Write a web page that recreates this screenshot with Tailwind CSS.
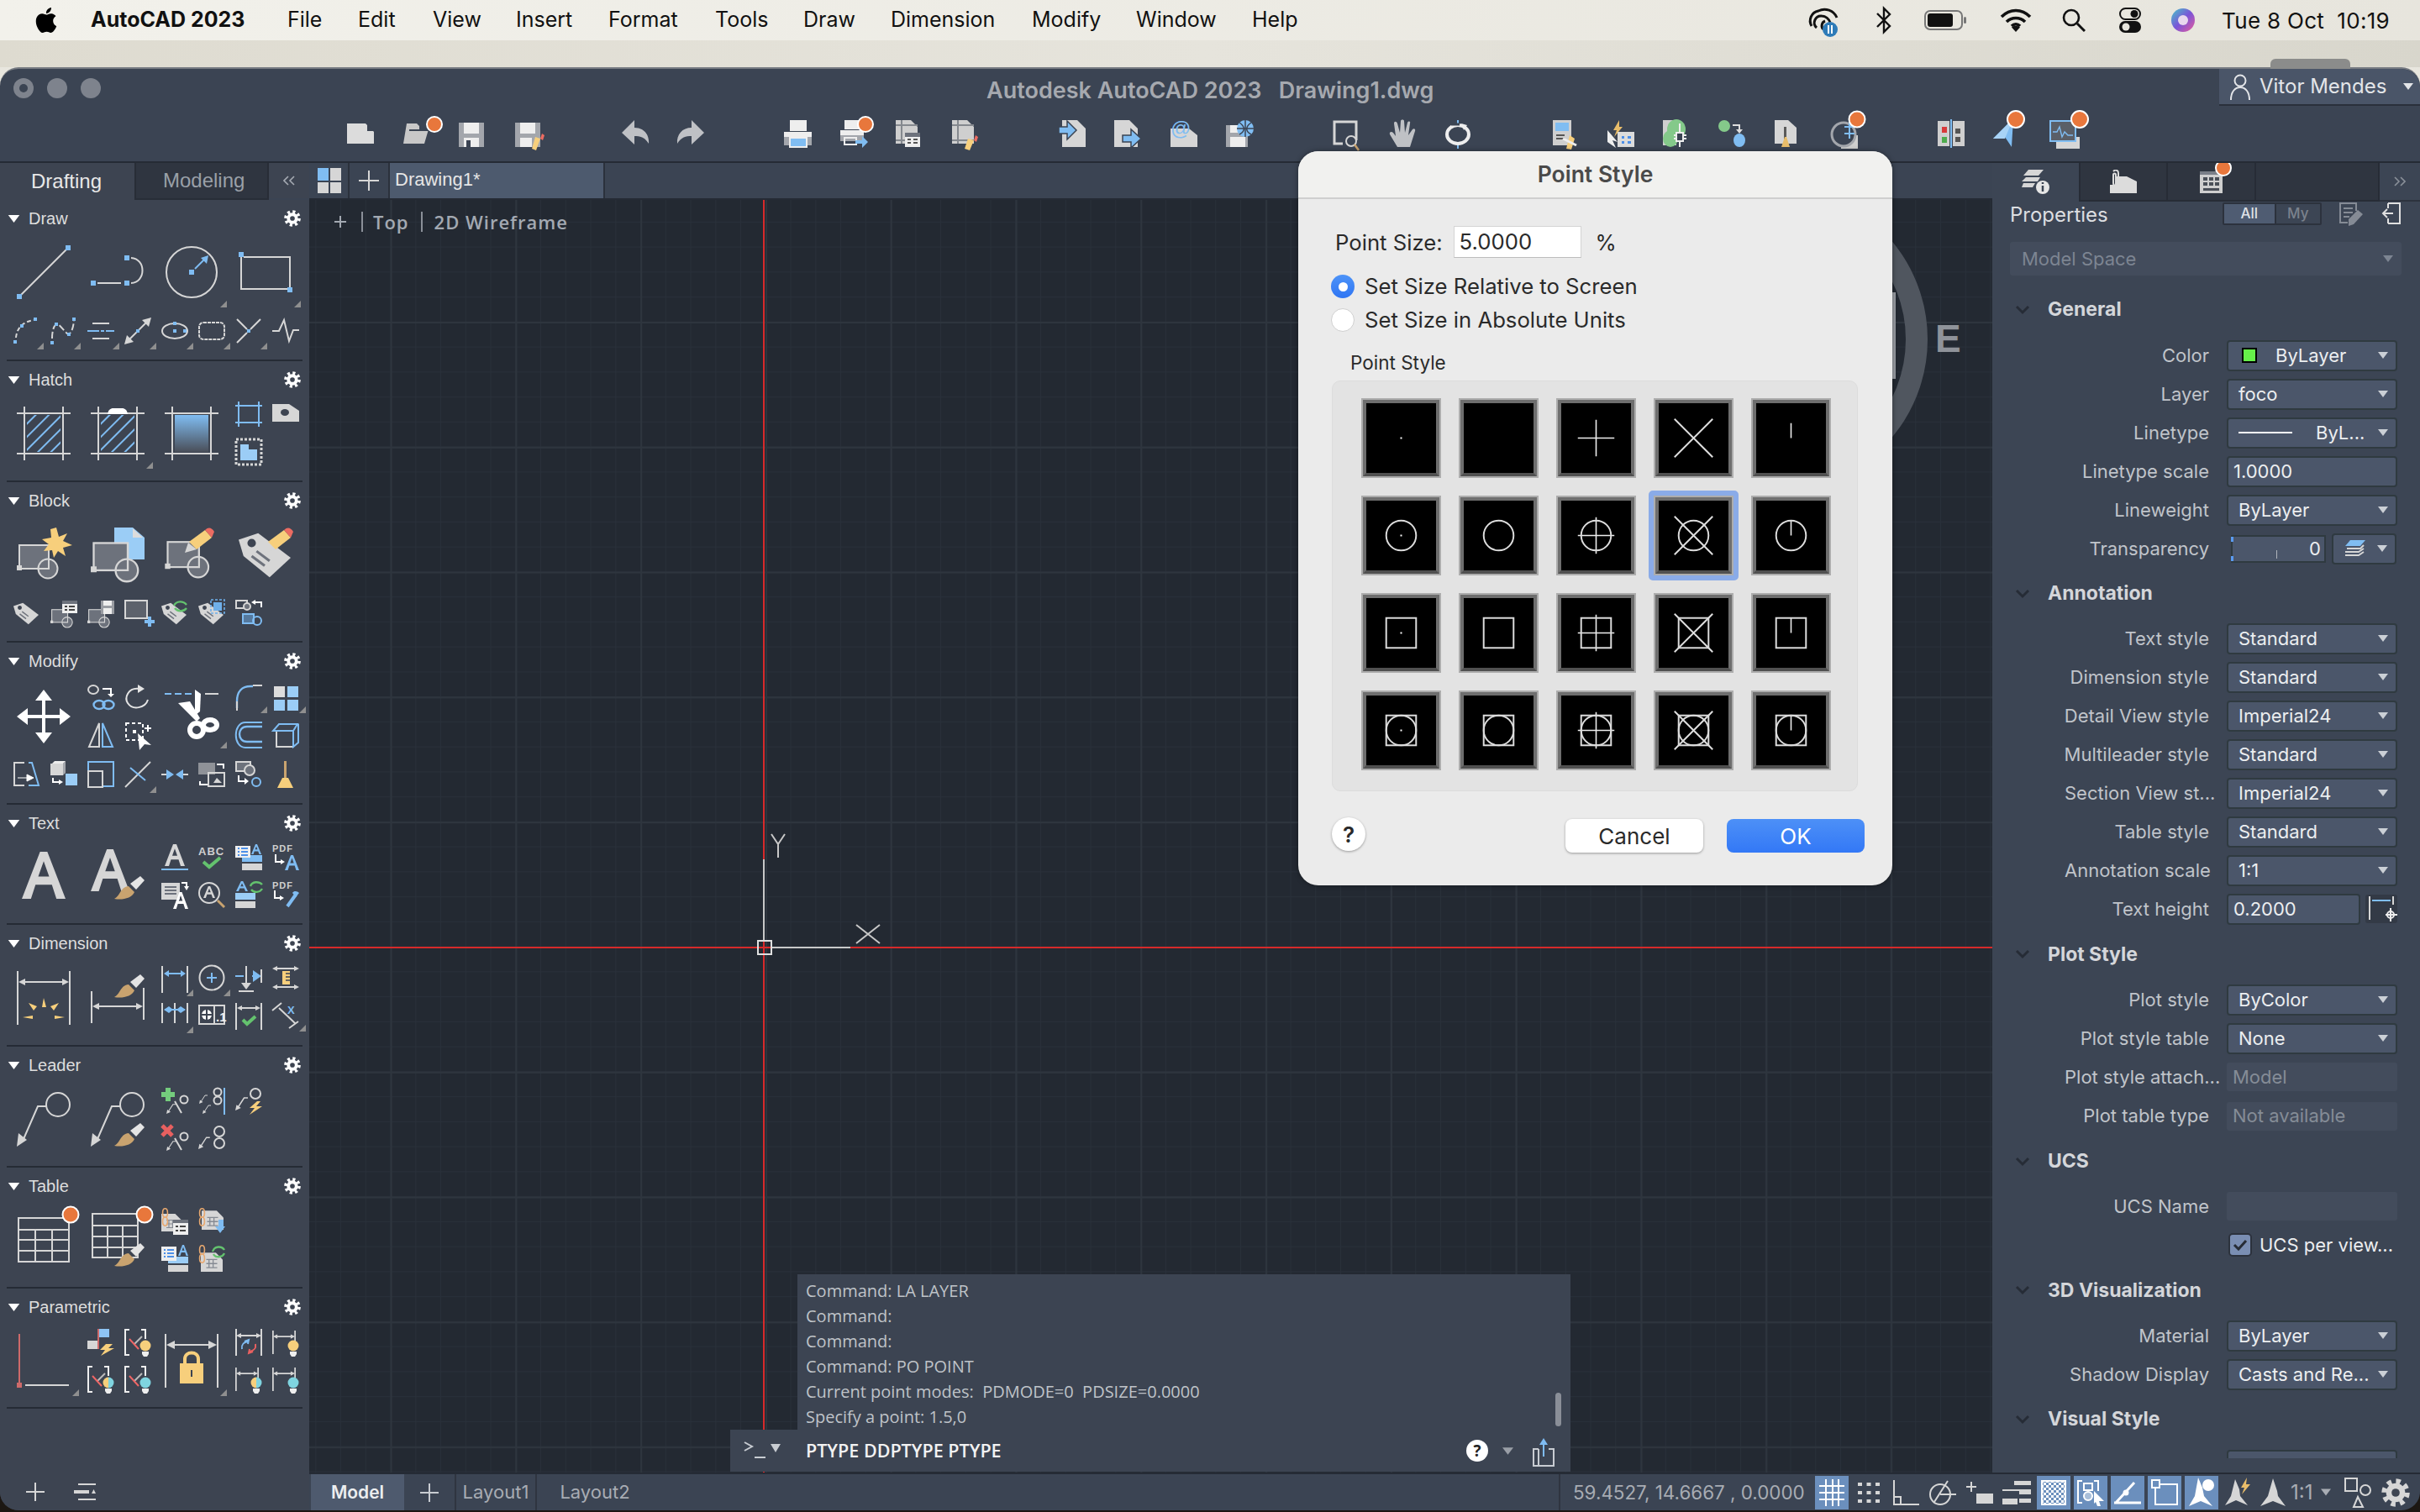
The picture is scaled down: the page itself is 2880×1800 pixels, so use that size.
<!DOCTYPE html>
<html>
<head>
<meta charset="utf-8">
<script src="https://cdn.jsdelivr.net/npm/@tailwindcss/browser@4"></script>
</head>
<body class="w-[2880px] h-[1800px] overflow-hidden relative flex flex-col font-['Inter'] bg-[linear-gradient(#e9e7df_0,#e6e4dc_300px,#1c1712_300px)]">
<svg class="absolute w-0 h-0">
<defs>
<pattern id="hp" width="11" height="11" patternUnits="userSpaceOnUse" patternTransform="rotate(45)"><rect width="2" height="11" fill="#7fbcf2" transform="rotate(0)"/></pattern>
<linearGradient id="gr" x1="0" y1="0" x2="0" y2="1"><stop offset="0" stop-color="#80bdf2"/><stop offset="1" stop-color="#4a4f59"/></linearGradient>
</defs>
<symbol id="gear" viewBox="0 0 24 24"><circle cx="12" cy="12" r="9.6" fill="none" stroke="currentColor" stroke-width="4.4" stroke-dasharray="3.77 3.77"/><circle cx="12" cy="12" r="8" fill="currentColor"/><circle cx="12" cy="12" r="3.4" fill="#3d4451"/></symbol>
<symbol id="tri" viewBox="0 0 12 8"><polygon points="0,0 12,0 6,8" fill="currentColor"/></symbol>
<symbol id="blk" viewBox="0 0 50 44" overflow="visible"><rect x="3" y="3" width="35" height="28" fill="#6d727c" stroke="#d6d6d6" stroke-width="2"/><rect x="0" y="27" width="6" height="6" fill="#d6d6d6"/><circle cx="37" cy="31" r="11.5" fill="#6d727c" stroke="#d6d6d6" stroke-width="2"/><path d="M38 3V31H26" fill="none" stroke="#d6d6d6" stroke-width="2"/></symbol>
<symbol id="tag" viewBox="0 0 32 28"><path d="M0 5 12 1 32 16 19 28 3 15Z" fill="#d6d6d6"/><circle cx="8" cy="7" r="2.6" fill="#3d4451"/><path d="M11 12l8 6M8 15l8 6" stroke="#6d727c" stroke-width="1.6"/></symbol>
<symbol id="brush" viewBox="0 0 36 28"><path d="M0 27C7 24 7 13 17 12L24 19C21 26 10 29 0 27Z" fill="#c9a36f"/><path d="M19 9 31 0 36 5 26 16Z" fill="#e4e4e4"/></symbol>
<symbol id="pencil" viewBox="0 0 36 30"><path d="M0 30 4 18 14 26Z" fill="#d6d6d6"/><path d="M5 17 24 3 32 12 14 26Z" fill="#f7cf7c"/><path d="M24 3C28 -1 32 0 35 5L32 12Z" fill="#ec6c62"/></symbol>
<symbol id="fly" viewBox="0 0 8 8"><polygon points="8,0 8,8 0,8" fill="#8f8f8f"/></symbol>
<symbol id="bulb" viewBox="0 0 14 20"><circle cx="7" cy="7" r="6.5" fill="currentColor"/><path d="M3 14h8v3l-2 3H5l-2-3Z" fill="#eee"/></symbol>
<symbol id="bulb2" viewBox="0 0 14 20"><path d="M7 .5A6.5 6.5 0 0 0 7 13.5Z" fill="#f7cf7c"/><path d="M7 .5A6.5 6.5 0 0 1 7 13.5Z" fill="#7fd4e0"/><path d="M3 14h8v3l-2 3H5l-2-3Z" fill="#eee"/></symbol>
<symbol id="dm" viewBox="0 0 32 32"><path d="M1 0V32M31 0V20M5 8H27" fill="none" stroke="#d6d6d6" stroke-width="2"/><path d="M1 8l6-3v6ZM31 8l-6-3v6Z" fill="#d6d6d6"/></symbol>
<symbol id="bk" viewBox="0 0 32 32"><path d="M6 1H1V31H6M20 1H25V12" fill="none" stroke="#eee" stroke-width="2"/><path d="M12 18 21 9" stroke="#bbb" stroke-width="2"/><path d="M6 12 17 24" stroke="#e66" stroke-width="2"/></symbol>
<symbol id="ldr" viewBox="0 0 32 32"><path d="M3 29 14 12H20" fill="none" stroke="#d6d6d6" stroke-width="2"/><path d="M0 32 2 23 9 28Z" fill="#d6d6d6"/></symbol>
<symbol id="chain" viewBox="0 0 10 28"><path d="M5 14C0 14 0 1 5 1S10 14 5 14C0 14 0 27 5 27S10 14 5 14Z" fill="none" stroke="#e8a86f" stroke-width="2"/></symbol>
<symbol id="tbl" viewBox="0 0 32 32"><path d="M0 4H22L32 14V32H0Z" fill="#d6d6d6"/><path d="M8 14H24M8 20H24M8 26H24M12 14V26M18 14V26" stroke="#858a93" stroke-width="1.6"/></symbol>
<symbol id="fa" viewBox="0 0 24 20" preserveAspectRatio="none"><path d="M0 20 10 0h4L24 20H19L16.500 14H7.500L5 20ZM9 10.500h6L12 4Z" fill="currentColor"/></symbol>
<g id="pd"><rect x="-1" y="-1" width="2" height="2" fill="#fff"/></g>
<g id="pc"><circle r="18" fill="none" stroke="#ddd" stroke-width="2"/></g>
<g id="ps"><rect x="-18" y="-18" width="36" height="36" fill="none" stroke="#ddd" stroke-width="2"/></g>
<g id="pp"><path d="M-22 0H22M0 -22V22" stroke="#eee" stroke-width="1.6"/></g>
<g id="px"><path d="M-23 -23 23 23M23 -23-23 23" stroke="#ddd" stroke-width="2"/></g>
<g id="pt"><path d="M0 -18V0" stroke="#eee" stroke-width="1.6"/></g>
</svg>

<!-- mac menu bar -->
<div class="h-12 shrink-0 flex items-center bg-[linear-gradient(90deg,#f2f1eb,#e7e5dd)] text-[#111] text-[25px]">
  <svg class="w-[30px] h-[32px] ml-[40px]" viewBox="0 0 24 24"><path fill="#000" d="M12.152 6.896c-.948 0-2.415-1.078-3.96-1.04-2.04.027-3.91 1.183-4.961 3.014-2.117 3.675-.546 9.103 1.519 12.09 1.013 1.454 2.208 3.09 3.792 3.039 1.52-.065 2.09-.987 3.935-.987 1.831 0 2.35.987 3.96.948 1.637-.026 2.676-1.48 3.676-2.948 1.156-1.688 1.636-3.325 1.662-3.415-.039-.013-3.182-1.221-3.22-4.857-.026-3.04 2.48-4.494 2.597-4.559-1.429-2.09-3.623-2.324-4.39-2.376-2-.156-3.675 1.09-4.61 1.09zM15.53 3.83c.843-1.012 1.4-2.427 1.245-3.83-1.207.052-2.662.805-3.532 1.818-.78.896-1.454 2.338-1.273 3.714 1.338.104 2.715-.688 3.559-1.701"/></svg>
  <span class="ml-[38px] font-bold w-[234px]">AutoCAD 2023</span>
  <span class="w-[84px]">File</span><span class="w-[89px]">Edit</span><span class="w-[99px]">View</span><span class="w-[110px]">Insert</span><span class="w-[127px]">Format</span><span class="w-[105px]">Tools</span><span class="w-[104px]">Draw</span><span class="w-[168px]">Dimension</span><span class="w-[124px]">Modify</span><span class="w-[138px]">Window</span><span>Help</span>
  <div class="ml-auto flex items-center mr-[36px] relative">
    <svg class="w-[44px] h-[42px] mr-[40px]" viewBox="0 0 44 42"><path d="M8 28A12 12 0 0 1 16 10 16 16 0 0 1 38 18M14 30A8 8 0 0 1 20 16 11 11 0 0 1 30 24M22 32A6 6 0 0 1 24 22" fill="none" stroke="#111" stroke-width="3"/><circle cx="30" cy="32" r="9" fill="#2e7bb8"/><path d="M28 27v10M32 27v10" stroke="#fff" stroke-width="2"/></svg>
    <svg class="w-[20px] h-[34px] mr-[38px]" viewBox="0 0 20 34"><path d="M2 9 17 24 10 31V3L17 10 2 25" fill="none" stroke="#111" stroke-width="2.4"/></svg>
    <svg class="w-[52px] h-[24px] mr-[38px]" viewBox="0 0 52 24"><rect x="1" y="1" width="44" height="22" rx="6" fill="none" stroke="#777" stroke-width="2"/><rect x="4" y="4" width="30" height="16" rx="3" fill="#111"/><rect x="47" y="8" width="3" height="8" rx="1.5" fill="#777"/></svg>
    <svg class="w-[38px] h-[28px] mr-[36px]" viewBox="0 0 38 28"><path d="M2 10C12 0 26 0 36 10M8 16C14 10 24 10 30 16M14 21C17 18 21 18 24 21" fill="none" stroke="#111" stroke-width="3.6"/><path d="M19 28 14 22.5C17 20 21 20 24 22.5Z" fill="#111"/></svg>
    <svg class="w-[28px] h-[28px] mr-[40px]" viewBox="0 0 28 28"><circle cx="11" cy="11" r="9" fill="none" stroke="#111" stroke-width="2.6"/><path d="M18 18 27 27" stroke="#111" stroke-width="3"/></svg>
    <svg class="w-[26px] h-[30px] mr-[36px]" viewBox="0 0 26 30"><rect x="1" y="1" width="24" height="13" rx="6.5" fill="none" stroke="#111" stroke-width="2"/><circle cx="18" cy="7.5" r="4.5" fill="#111"/><rect x="0" y="16" width="26" height="14" rx="7" fill="#111"/><circle cx="8" cy="23" r="4.5" fill="#e7e5dd"/></svg>
    <svg class="w-[28px] h-[28px] mr-[32px]" viewBox="0 0 28 28"><defs><linearGradient id="si" x1="0" y1="0" x2="1" y2="1"><stop offset="0" stop-color="#46c6c8"/><stop offset=".5" stop-color="#7a55d8"/><stop offset="1" stop-color="#e85c9a"/></linearGradient></defs><circle cx="14" cy="14" r="14" fill="url(#si)"/><circle cx="14" cy="14" r="6" fill="#e8d8ee"/></svg>
    <span class="whitespace-pre text-[26px] tracking-[.3px]">Tue 8 Oct  10:19</span>
  </div>
</div>
<div class="h-8 shrink-0 relative bg-[linear-gradient(90deg,#dedbd0,#e6e4dc_50%,#d8d6cc)]"><div class="absolute left-[2702px] top-[22px] w-[95px] h-[12px] rounded-t-[6px] bg-[#8b8c8b]"></div></div>

<!-- window -->
<div class="flex-1 mb-[2px] rounded-[22px] overflow-hidden border-t-[2px] border-[#777b82] bg-[#3b4453] flex flex-col">
  <!-- title -->
  <div class="h-[46px] shrink-0 flex items-center relative">
    <span class="w-6 h-6 ml-4 rounded-full bg-[#7e838d] flex items-center justify-center"><span class="w-[10px] h-[10px] rounded-full bg-[#3b4453]"></span></span>
    <span class="w-6 h-6 ml-4 rounded-full bg-[#7e838d]"></span>
    <span class="w-6 h-6 ml-4 rounded-full bg-[#7e838d]"></span>
    <span class="absolute left-[1174px] top-[9px] text-[27px] leading-[34px] font-semibold text-[#a6a9af] whitespace-pre">Autodesk AutoCAD 2023   Drawing1.dwg</span>
    <div class="ml-auto w-[239px] h-[44px] -mt-[3px] bg-[#4a5568] border-b-[2px] border-[#2a303b] rounded-tr-[22px] flex items-center text-[24px] text-[#e3e5e8]">
      <svg class="w-[26px] h-[32px] ml-[12px] mr-[10px]" viewBox="0 0 26 32"><circle cx="13" cy="9" r="6.5" fill="none" stroke="#e3e5e8" stroke-width="2"/><path d="M2 32C2 22 7 17 13 17S24 22 24 32" fill="none" stroke="#e3e5e8" stroke-width="2"/></svg>
      Vitor Mendes
      <svg class="w-[12px] h-[8px] ml-[20px] text-[#e3e5e8]"><use href="#tri"/></svg>
    </div>
  </div>
  <!-- toolbar -->
  <div class="h-[64px] shrink-0 flex items-center pl-[413px] pb-[2px] [&>svg]:shrink-0 [&>svg]:overflow-visible">
    <svg class="w-[36px] h-[32px] mr-[30.5px]" viewBox="0 0 36 32"><path d="M0 4H22L32 14V28H0Z" fill="#dcdcdc"/><path d="M24 4 32 13H24Z" fill="#3b4453" stroke="#dcdcdc" stroke-width="0"/></svg>
    <svg class="w-[36px] h-[32px] mr-[30.5px]" viewBox="0 0 36 32"><path d="M4 4H16L19 7V11H30L25 28H0Z" fill="#c8c8c8"/><path d="M7 12H34L28 28" fill="none" stroke="#3b4453" stroke-width="2"/><circle cx="37" cy="5" r="9" fill="#e8773c" stroke="#fff" stroke-width="2"/></svg>
    <svg class="w-[36px] h-[32px] mr-[30.5px]" viewBox="0 0 36 32"><rect x="0" y="3" width="30" height="29" fill="#a3a6ac"/><rect x="6" y="3" width="18" height="13" fill="#eee"/><rect x="6" y="21" width="18" height="11" fill="#eee"/><rect x="9" y="24" width="5" height="8" fill="#3b4453"/></svg>
    <svg class="w-[36px] h-[32px] mr-[91px]" viewBox="0 0 36 32"><rect x="0" y="3" width="30" height="29" fill="#a3a6ac"/><rect x="6" y="3" width="18" height="13" fill="#eee"/><rect x="6" y="21" width="14" height="11" fill="#eee"/><path d="M20 34 24 20 30 22 25 36Z" fill="#f7cf7c"/><path d="M30 22 32 16 35 18 33 24Z" fill="#ec6c62"/></svg>
    <svg class="w-[36px] h-[32px] mr-[30.5px]" viewBox="0 0 36 32"><path d="M0 15 15 0V9C26 9 33 17 32 28 27 20 22 19 15 19V29Z" fill="#bfc1c5"/></svg>
    <svg class="w-[36px] h-[32px] mr-[91px]" viewBox="0 0 36 32"><path d="M32 15 17 0V9C6 9-1 17 0 28 5 20 10 19 17 19V29Z" fill="#bfc1c5"/></svg>
    <svg class="w-[36px] h-[32px] mr-[30.5px]" viewBox="0 0 36 32"><rect x="7" y="0" width="20" height="13" fill="#eee"/><rect x="0" y="14" width="33" height="6" fill="#eee"/><rect x="0" y="20" width="33" height="10" fill="#a3a6ac"/><rect x="7" y="21" width="20" height="11" fill="#80bdf2" stroke="#eee" stroke-width="2"/></svg>
    <svg class="w-[36px] h-[32px] mr-[30.5px]" viewBox="0 0 36 32"><rect x="5" y="0" width="18" height="11" fill="#eee"/><rect x="0" y="12" width="28" height="6" fill="#eee"/><rect x="0" y="18" width="28" height="7" fill="#a3a6ac"/><rect x="5" y="21" width="14" height="8" fill="none" stroke="#eee" stroke-width="2"/><path d="M18 24H26V19L33 26 26 33V28H18Z" fill="#80bdf2"/><circle cx="30" cy="5" r="9" fill="#e8773c" stroke="#fff" stroke-width="2"/></svg>
    <svg class="w-[36px] h-[32px] mr-[30.5px]" viewBox="0 0 36 32"><path d="M0 0H18L26 8V28H0Z" fill="#cfcfcf"/><path d="M0 6H26M0 24H14M7 0V28" stroke="#85898f" stroke-width="2"/><rect x="11" y="15" width="18" height="17" fill="#eee"/><rect x="11" y="15" width="18" height="5" fill="#6d727c"/><path d="M14 23h4M14 27h4M21 23h5M21 27h5" stroke="#555" stroke-width="2"/></svg>
    <svg class="w-[36px] h-[32px] mr-[91px]" viewBox="0 0 36 32"><path d="M0 0H18L26 8V28H0Z" fill="#cfcfcf"/><path d="M0 6H26M0 24H26M7 0V28" stroke="#85898f" stroke-width="2"/><path d="M15 34 19 22 26 24 21 36Z" fill="#f7cf7c"/><path d="M26 24 28 18 31 20 29 26Z" fill="#ec6c62"/></svg>
    <svg class="w-[36px] h-[32px] mr-[30.5px]" viewBox="0 0 36 32"><path d="M4 0H22L32 10V32H4Z" fill="#d6d6d6"/><path d="M0 8H10V1L21 12 10 23V16H0Z" fill="#80bdf2" stroke="#3b4453" stroke-width="1.5"/></svg>
    <svg class="w-[36px] h-[32px] mr-[30.5px]" viewBox="0 0 36 32"><path d="M0 0H18L28 10V32H0Z" fill="#d6d6d6"/><path d="M10 18H20V11L32 22 20 33V26H10Z" fill="#80bdf2" stroke="#3b4453" stroke-width="1.5"/></svg>
    <svg class="w-[36px] h-[32px] mr-[30.5px]" viewBox="0 0 36 32"><path d="M0 10H22L32 18V32H0Z" fill="#d6d6d6"/><text x="0" y="18" font-size="24" font-family="Liberation Sans" fill="#80bdf2">@</text></svg>
    <svg class="w-[36px] h-[32px] mr-[91px]" viewBox="0 0 36 32"><rect x="0" y="6" width="26" height="26" fill="#a3a6ac"/><rect x="5" y="6" width="14" height="9" fill="#eee"/><rect x="5" y="20" width="18" height="12" fill="#eee"/><circle cx="23" cy="10" r="10" fill="#80bdf2"/><path d="M13 10H33M23 0V20M16 3C22 7 24 13 16 17M30 3C24 7 22 13 30 17" fill="none" stroke="#3b4453" stroke-width="1.5"/></svg>
    <svg class="w-[36px] h-[32px] mr-[30.5px]" viewBox="0 0 36 32"><path d="M12 28H2V2H28V24" fill="none" stroke="#d6d6d6" stroke-width="3"/><circle cx="22" cy="25" r="6" fill="#3b4453" stroke="#d6d6d6" stroke-width="2"/><path d="M26 29 31 36" stroke="#c9a36f" stroke-width="2.5"/></svg>
    <svg class="w-[36px] h-[32px] mr-[30.5px]" viewBox="0 0 36 32"><path d="M10 32 1 17C0 14 3 13 5 15L8 19 6 4C6 1 9 1 10 4L13 15 14 1C14-1 18-1 18 1L19 15 22 3C23 1 26 1 25 4L23 18 28 11C30 9 32 11 31 13L25 32Z" fill="#bfc1c5"/></svg>
    <svg class="w-[36px] h-[32px] mr-[91px]" viewBox="0 0 36 32"><path d="M16 0V8M16 26V34" stroke="#80bdf2" stroke-width="2"/><ellipse cx="16" cy="17" rx="13" ry="11" fill="none" stroke="#eee" stroke-width="4"/><path d="M20 4 27 6 23 12Z" fill="#eee"/><path d="M8 5H18" stroke="#3b4453" stroke-width="3"/></svg>
    <svg class="w-[36px] h-[32px] mr-[30.5px]" viewBox="0 0 36 32"><rect x="2" y="0" width="22" height="30" fill="#cfcfcf"/><rect x="5" y="3" width="16" height="10" fill="#80bdf2"/><path d="M6 18H16M6 22H16" stroke="#555" stroke-width="2"/><path d="M18 34 22 18 28 22 24 35Z" fill="#f7cf7c"/><path d="M14 22 30 30" stroke="#eee" stroke-width="3"/></svg>
    <svg class="w-[36px] h-[32px] mr-[30.5px]" viewBox="0 0 36 32"><path d="M14 0 7 12H11L8 20 18 8H14Z" fill="#e9bd6a"/><path d="M0 12 12 26 6 24 10 33 0 26Z" fill="#eee"/><rect x="12" y="14" width="20" height="18" fill="#dcdcdc"/><path d="M17 19h3v3h-3zM24 19h4v3h-4zM17 25h3v3h-3zM24 25h4v3h-4z" fill="#4d90e8"/></svg>
    <svg class="w-[36px] h-[32px] mr-[30.5px]" viewBox="0 0 36 32"><rect x="0" y="0" width="16" height="30" fill="#cfcfcf"/><ellipse cx="16" cy="11" rx="11" ry="12" fill="#84c98a"/><ellipse cx="9" cy="22" rx="9" ry="10" fill="#84c98a"/><path d="M20 4V32M13 18H28M13 22H28" stroke="#eee" stroke-width="2"/><rect x="16" y="15" width="8" height="10" fill="#3b4453" stroke="#eee" stroke-width="2"/></svg>
    <svg class="w-[36px] h-[32px] mr-[30.5px]" viewBox="0 0 36 32"><ellipse cx="6" cy="7" rx="7" ry="7" fill="#84c98a"/><ellipse cx="24" cy="24" rx="7" ry="8" fill="#80bdf2"/><path d="M16 6H24V12" fill="none" stroke="#ddd" stroke-width="2"/><path d="M20 11H28L24 16Z" fill="#ddd"/></svg>
    <svg class="w-[36px] h-[32px] mr-[30.5px]" viewBox="0 0 36 32"><path d="M0 0H16L26 9V28H0Z" fill="#d6d6d6"/><rect x="11" y="8" width="3" height="16" fill="#5a5a5a"/><path d="M8 32 12 20H14L18 32Z" fill="#e9bd6a"/></svg>
    <svg class="w-[36px] h-[32px] mr-[91px]" viewBox="0 0 36 32"><rect x="12" y="18" width="20" height="16" fill="#cfcfcf"/><circle cx="15" cy="17" r="14" fill="#3b4453" stroke="#a3a6ac" stroke-width="3"/><path d="M22 0V22M16 8H28M16 16H28" stroke="#80bdf2" stroke-width="2"/><circle cx="31" cy="-1" r="9.5" fill="#e8773c" stroke="#fff" stroke-width="2"/></svg>
    <svg class="w-[36px] h-[32px] mr-[30.5px]" viewBox="0 0 36 32"><rect x="0" y="1" width="14" height="30" fill="#cfcfcf"/><rect x="18" y="1" width="14" height="30" fill="#cfcfcf"/><path d="M16 -1V33" stroke="#80bdf2" stroke-width="2"/><rect x="5" y="8" width="6" height="7" fill="#d83a3a"/><rect x="5" y="20" width="6" height="7" fill="#4dab4d"/><rect x="21" y="10" width="6" height="6" fill="#555"/><rect x="21" y="20" width="6" height="6" fill="#555"/></svg>
    <svg class="w-[36px] h-[32px] mr-[30.5px]" viewBox="0 0 36 32"><path d="M0 22 24-2 22 32 14 20Z" fill="#80bdf2"/><path d="M0 22 24-2 14 22Z" fill="#a8d3f6"/><circle cx="27" cy="-1" r="10" fill="#e8773c" stroke="#fff" stroke-width="2"/></svg>
    <svg class="w-[36px] h-[32px]" viewBox="0 0 36 32"><rect x="8" y="20" width="28" height="14" fill="#d6d6d6"/><rect x="1" y="1" width="30" height="24" fill="#5a5f68" stroke="#80bdf2" stroke-width="2"/><path d="M4 14 9 14 12 8 15 20 18 14 22 18 28 18" fill="none" stroke="#80bdf2" stroke-width="1.4"/><circle cx="36" cy="-1" r="10" fill="#e8773c" stroke="#fff" stroke-width="2"/></svg>
  </div>
  <div class="h-[2px] shrink-0 bg-[#252b35]"></div>

  <!-- main -->
  <div class="flex-1 flex min-h-0">
    <!-- left panel -->
    <div class="w-[368px] shrink-0 bg-[#3d4451] flex flex-col font-['Liberation_Sans'] text-[20px] text-[#dedede] relative">
      <div class="flex h-[44px] shrink-0">
        <div class="w-[160px] flex items-center pl-[37px] text-[24px] text-[#e8e8e8]">Drafting</div>
        <div class="w-[160px] flex items-center pl-[32px] text-[24px] text-[#9aa0a8] bg-[#2f3540] border-x-[2px] border-b-[2px] border-[#282d37]">Modeling</div>
        <div class="w-[48px] flex items-center justify-center border-b-[2px] border-[#3b4453]"><svg class="w-[14px] h-[12px]" viewBox="0 0 14 12"><path d="M6 1 1 6 6 11M13 1 8 6 13 11" fill="none" stroke="#a5aab2" stroke-width="1.6"/></svg></div>
      </div>

      <!-- Draw -->
      <div class="h-[192px] mx-[8px] shrink-0 border-b-[2px] border-[#252b35]">
        <div class="h-[44px] flex items-center"><svg class="w-[17px] h-[9px] text-white"><use href="#tri"/></svg><span class="ml-[9px]">Draw</span><svg class="w-[20px] h-[20px] ml-auto mr-[2px] text-white"><use href="#gear"/></svg></div>
        <div class="mt-[4px] ml-[8px] grid grid-cols-[repeat(8,32px)] gap-x-[12px] grid-rows-[76px_32px] gap-y-[16px] [&_svg]:overflow-visible">
          <div class="col-span-2 pl-[4px] pt-[6px]"><svg class="w-16 h-16" viewBox="0 0 64 64"><path d="M3 61 61 3" stroke="#d6d6d6" stroke-width="2"/><rect x="0" y="58" width="6" height="6" fill="#7fbcf2"/><rect x="58" y="0" width="6" height="6" fill="#7fbcf2"/></svg></div>
          <div class="col-span-2 pl-[4px] pt-[6px]"><svg class="w-16 h-16" viewBox="0 0 64 64"><path d="M8 45H36M48 45C66 44 66 16 48 15" fill="none" stroke="#d6d6d6" stroke-width="2"/><path d="M0 42h6v6H0zM40 42h6v6h-6zM40 12h6v6h-6z" fill="#7fbcf2"/></svg></div>
          <div class="col-span-2 pl-[4px] pt-[6px]"><svg class="w-16 h-16" viewBox="0 0 64 64"><circle cx="32" cy="32" r="30" fill="none" stroke="#d6d6d6" stroke-width="2"/><rect x="29" y="29" width="6" height="6" fill="#7fbcf2"/><path d="M36 28 48 16" stroke="#7fbcf2" stroke-width="2"/><path d="M52 12 50 22 43 15Z" fill="#7fbcf2"/><use href="#fly" x="66" y="66" width="8" height="8"/></svg></div>
          <div class="col-span-2 pl-[4px] pt-[6px]"><svg class="w-16 h-16" viewBox="0 0 64 64"><path d="M3 14V52H61V14H6" fill="none" stroke="#d6d6d6" stroke-width="2"/><path d="M0 8h6v6H0zM58 50h6v6h-6z" fill="#7fbcf2"/><use href="#fly" x="66" y="66" width="8" height="8"/></svg></div>
          <svg viewBox="0 0 32 32" class="w-8 h-8"><path d="M3 24C4 12 12 5 24 3" fill="none" stroke="#d6d6d6" stroke-width="2" stroke-dasharray="5 3"/><path d="M0 27h4v4H0zM8 8h4v4H8zM24 0h4v4h-4z" fill="#7fbcf2"/><use href="#fly" x="28" y="30" width="8" height="8"/></svg>
          <svg viewBox="0 0 32 32" class="w-8 h-8"><path d="M2 25C2 14 5 8 8 8S16 16 21 20C24 20 27 14 28 4" fill="none" stroke="#d6d6d6" stroke-width="2" stroke-dasharray="8 3"/><path d="M0 28h4v4H0zM5 6h4v4H5zM20 18h4v4h-4zM26 0h4v4h-4z" fill="#7fbcf2"/><use href="#fly" x="28" y="30" width="8" height="8"/></svg>
          <svg viewBox="0 0 32 32" class="w-8 h-8"><path d="M6 7H26M6 25H26" stroke="#d6d6d6" stroke-width="2"/><path d="M0 16H14M16 16H20M22 16H32" stroke="#7fbcf2" stroke-width="2"/><use href="#fly" x="30" y="30" width="8" height="8"/></svg>
          <svg viewBox="0 0 32 32" class="w-8 h-8"><path d="M6 26 26 6" stroke="#d6d6d6" stroke-width="2"/><path d="M0 32 3 21 11 29ZM32 0 21 3 29 11Z" fill="#d6d6d6"/><path d="M14 14h4v4h-4z" fill="#7fbcf2"/><use href="#fly" x="30" y="30" width="8" height="8"/></svg>
          <svg viewBox="0 0 32 32" class="w-8 h-8"><ellipse cx="16" cy="16" rx="15" ry="9" fill="none" stroke="#d6d6d6" stroke-width="2"/><path d="M14 5h4v4h-4zM14 14h4v4h-4zM26 14h4v4h-4z" fill="#7fbcf2"/><use href="#fly" x="30" y="30" width="8" height="8"/></svg>
          <svg viewBox="0 0 32 32" class="w-8 h-8"><rect x="1" y="6" width="30" height="20" rx="5" fill="none" stroke="#d6d6d6" stroke-width="2" stroke-dasharray="4 1"/><use href="#fly" x="30" y="30" width="8" height="8"/></svg>
          <svg viewBox="0 0 32 32" class="w-8 h-8"><path d="M2 2 14 14M30 2 18 14M2 30 14 18" stroke="#d6d6d6" stroke-width="2"/><rect x="14" y="14" width="4" height="4" fill="#7fbcf2"/><use href="#fly" x="30" y="30" width="8" height="8"/></svg>
          <svg viewBox="0 0 32 32" class="w-8 h-8"><path d="M0 16H8L14 3 20 28 25 15H32" fill="none" stroke="#d6d6d6" stroke-width="2"/></svg>
        </div>
      </div>

      <!-- Hatch -->
      <div class="h-[144px] mx-[8px] shrink-0 border-b-[2px] border-[#252b35]">
        <div class="h-[44px] flex items-center"><svg class="w-[17px] h-[9px] text-white"><use href="#tri"/></svg><span class="ml-[9px]">Hatch</span><svg class="w-[20px] h-[20px] ml-auto mr-[2px] text-white"><use href="#gear"/></svg></div>
        <div class="mt-[4px] ml-[8px] grid grid-cols-[repeat(8,32px)] gap-x-[12px] grid-rows-[32px_32px] gap-y-[12px] [&_svg]:overflow-visible">
          <div class="col-span-2 row-span-2 pl-[4px] pt-[6px]"><svg class="w-16 h-16" viewBox="0 0 64 64"><rect x="12" y="10" width="40" height="44" fill="url(#hp)"/><path d="M0 8H64M0 56H64M9 0V64M55 0V64" stroke="#d6d6d6" stroke-width="2"/></svg></div>
          <div class="col-span-2 row-span-2 pl-[4px] pt-[6px]"><svg class="w-16 h-16" viewBox="0 0 64 64"><rect x="12" y="10" width="40" height="44" fill="url(#hp)"/><path d="M0 8H64M0 56H64M9 0V64M55 0V64" stroke="#d6d6d6" stroke-width="2"/><path d="M20 9C21 4 23 2 27 2H37C41 2 43 4 44 9Z" fill="#fff"/><use href="#fly" x="66" y="66" width="8" height="8"/></svg></div>
          <div class="col-span-2 row-span-2 pl-[4px] pt-[6px]"><svg class="w-16 h-16" viewBox="0 0 64 64"><rect x="12" y="10" width="40" height="44" fill="url(#gr)"/><path d="M0 8H64M0 56H64M9 0V64M55 0V64" stroke="#d6d6d6" stroke-width="2"/></svg></div>
          <svg viewBox="0 0 32 32" class="w-8 h-8"><path d="M0 5H32M0 25H32M4 0V30M28 0V30" stroke="#7fbcf2" stroke-width="2"/></svg>
          <svg viewBox="0 0 32 32" class="w-8 h-8"><path d="M0 3H20L32 11V24H0Z" fill="#d6d6d6"/><ellipse cx="15" cy="13" rx="5" ry="4" fill="#3d4451"/></svg>
          <svg viewBox="0 0 32 32" class="w-8 h-8"><rect x="1" y="1" width="30" height="30" fill="none" stroke="#d6d6d6" stroke-width="3" stroke-dasharray="3 2"/><path d="M6 7H16V13H26V26H6Z" fill="#9bcdf6"/></svg>
        </div>
      </div>

      <!-- Block -->
      <div class="h-[191px] mx-[8px] shrink-0 border-b-[2px] border-[#252b35]">
        <div class="h-[44px] flex items-center"><svg class="w-[17px] h-[9px] text-white"><use href="#tri"/></svg><span class="ml-[9px]">Block</span><svg class="w-[20px] h-[20px] ml-auto mr-[2px] text-white"><use href="#gear"/></svg></div>
        <div class="mt-[4px] ml-[8px] grid grid-cols-[repeat(8,32px)] gap-x-[12px] grid-rows-[76px_32px] gap-y-[16px] [&_svg]:overflow-visible">
          <div class="col-span-2 pl-[4px] pt-[6px]"><svg class="w-16 h-16" viewBox="0 0 64 64"><use href="#blk" x="0" y="18" width="50" height="44"/><path d="M47 0 50 11 60 7 55 16 66 21 55 24 58 34 49 28 44 36 42 27 32 28 38 20 30 14 41 12 40 2Z" fill="#f7cf7c"/></svg></div>
          <div class="col-span-2 pl-[4px] pt-[6px]"><svg class="w-16 h-16" viewBox="0 0 64 64"><path d="M28 0H50L64 12V38H28Z" fill="#9bcdf6"/><path d="M50 1V12H62Z" fill="#dcdcdc"/><use href="#blk" x="0" y="15" width="58" height="51"/></svg></div>
          <div class="col-span-2 pl-[4px] pt-[6px]"><svg class="w-16 h-16" viewBox="0 0 64 64"><use href="#blk" x="0" y="14" width="54" height="47"/><use href="#pencil" x="24" y="0" width="36" height="30"/></svg></div>
          <div class="col-span-2 pl-[4px] pt-[6px]"><svg class="w-16 h-16" viewBox="0 0 64 64"><use href="#tag" x="0" y="2" width="62" height="60"/><use href="#pencil" x="30" y="0" width="36" height="30"/></svg></div>
          <svg viewBox="0 0 32 32" class="w-8 h-8"><use href="#tag" x="0" y="2" width="30" height="28"/></svg>
          <svg viewBox="0 0 32 32" class="w-8 h-8"><use href="#blk" x="0" y="10" width="27" height="24"/><rect x="14" y="1" width="18" height="15" fill="#eee"/><rect x="14" y="1" width="18" height="4" fill="#6d727c"/><path d="M17 8h3M17 12h3M22 8h7M22 12h7" stroke="#444" stroke-width="2"/></svg>
          <svg viewBox="0 0 32 32" class="w-8 h-8"><use href="#blk" x="0" y="10" width="27" height="24"/><rect x="16" y="1" width="16" height="16" fill="#9a9da3"/><rect x="19" y="1" width="10" height="6" fill="#eee"/><rect x="19" y="10" width="10" height="7" fill="#eee"/></svg>
          <svg viewBox="0 0 32 32" class="w-8 h-8"><rect x="1" y="1" width="26" height="21" fill="#5d626c" stroke="#d6d6d6" stroke-width="2"/><path d="M24 24H28V20H32V24H36V28H32V32H28V28H24Z" fill="#7fbcf2"/></svg>
          <svg viewBox="0 0 32 32" class="w-8 h-8"><use href="#tag" x="0" y="2" width="30" height="28"/><path d="M15 7C18 1 26 1 30 6M30 10C26 15 19 14 16 10" fill="none" stroke="#64c26e" stroke-width="2.4"/></svg>
          <svg viewBox="0 0 32 32" class="w-8 h-8"><use href="#tag" x="0" y="2" width="30" height="28"/><rect x="18" y="3" width="10" height="10" fill="#6fb0ea"/><rect x="15" y="0" width="16" height="16" fill="none" stroke="#6fb0ea" stroke-width="1.6" stroke-dasharray="3 2"/></svg>
          <svg viewBox="0 0 32 32" class="w-8 h-8"><rect x="1" y="1" width="13" height="9" fill="none" stroke="#d6d6d6" stroke-width="2"/><circle cx="14" cy="8" r="4" fill="#6d727c" stroke="#d6d6d6" stroke-width="2"/><path d="M22 3H31V9" fill="none" stroke="#fff" stroke-width="2"/><path d="M24 0V6L19 3Z" fill="#fff"/><rect x="9" y="17" width="13" height="11" fill="#55799e" stroke="#7fbcf2" stroke-width="2"/><circle cx="26" cy="25" r="5" fill="none" stroke="#7fbcf2" stroke-width="2"/></svg>
        </div>
      </div>

      <!-- Modify -->
      <div class="h-[193px] mx-[8px] shrink-0 border-b-[2px] border-[#252b35]">
        <div class="h-[44px] flex items-center"><svg class="w-[17px] h-[9px] text-white"><use href="#tri"/></svg><span class="ml-[9px]">Modify</span><svg class="w-[20px] h-[20px] ml-auto mr-[2px] text-white"><use href="#gear"/></svg></div>
        <div class="mt-[6px] ml-[8px] grid grid-cols-[repeat(8,32px)] gap-x-[12px] grid-rows-[32px_35px_32px] gap-y-[12px] [&_svg]:overflow-visible">
          <div class="col-span-2 row-span-2 pl-[4px] pt-[6px]"><svg class="w-16 h-16" viewBox="0 0 64 64"><path d="M32 0 42 13H34V30H51V22L64 32 51 42V34H34V51H42L32 64 22 51H30V34H13V42L0 32 13 22V30H30V13H22Z" fill="#fff"/></svg></div>
          <svg viewBox="0 0 32 32" class="w-8 h-8"><ellipse cx="7" cy="6" rx="6" ry="5" fill="none" stroke="#d6d6d6" stroke-width="2"/><path d="M18 5H28V12" fill="none" stroke="#fff" stroke-width="2"/><path d="M24 11H32L28 15Z" fill="#fff"/><ellipse cx="14" cy="24" rx="6.5" ry="5" fill="none" stroke="#7fbcf2" stroke-width="2.4"/><ellipse cx="25" cy="24" rx="6.5" ry="5" fill="none" stroke="#7fbcf2" stroke-width="2.4"/></svg>
          <svg viewBox="0 0 32 32" class="w-8 h-8"><path d="M18 5C4 3 0 16 4 22 10 31 25 28 28 18" fill="none" stroke="#e4e4e4" stroke-width="2"/><path d="M16 0 24 5 16 10Z" fill="#e4e4e4"/></svg>
          <div class="col-span-2 row-span-2 pl-[4px] pt-[6px]"><svg class="w-16 h-16" viewBox="0 0 64 64"><path d="M0 5H32" stroke="#7fbcf2" stroke-width="2" stroke-dasharray="8 4"/><path d="M48 5H64" stroke="#d6d6d6" stroke-width="2"/><path d="M36 0 43 5 42 26 37 30 36 26Z" fill="#fff"/><path d="M16 16 38 38 42 34 30 14Z" fill="#fff"/><circle cx="38" cy="48" r="8" fill="none" stroke="#fff" stroke-width="6"/><ellipse cx="54" cy="42" rx="8" ry="6" fill="none" stroke="#fff" stroke-width="6"/><use href="#fly" x="66" y="62" width="8" height="8"/></svg></div>
          <svg viewBox="0 0 32 32" class="w-8 h-8"><path d="M2 28V20C2 8 8 2 18 2H21" fill="none" stroke="#7fbcf2" stroke-width="2.4"/><path d="M21 1H32" stroke="#d6d6d6" stroke-width="2"/><path d="M2 20V31" stroke="#d6d6d6" stroke-width="2"/><use href="#fly" x="30" y="26" width="8" height="8"/></svg>
          <svg viewBox="0 0 32 32" class="w-8 h-8"><path d="M2 2h13v13H2z" fill="#dcdcdc"/><path d="M18 2h13v13H18zM2 18h13v13H2zM18 18h13v13H18z" fill="#9bcdf6"/><use href="#fly" x="32" y="26" width="8" height="8"/></svg>
          <svg viewBox="0 0 32 32" class="w-8 h-8"><path d="M14 2 2 30H14Z" fill="none" stroke="#d6d6d6" stroke-width="2"/><path d="M18 2 30 30H18Z" fill="none" stroke="#7fbcf2" stroke-width="2"/></svg>
          <svg viewBox="0 0 32 32" class="w-8 h-8"><rect x="2" y="2" width="20" height="20" fill="none" stroke="#fff" stroke-width="2" stroke-dasharray="4 3"/><rect x="10" y="10" width="4" height="4" fill="#fff"/><path d="M16 14 32 28 24 27 18 34Z" fill="#fff"/><path d="M24 8H32M28 4V12" stroke="#fff" stroke-width="2"/></svg>
          <svg viewBox="0 0 32 32" class="w-8 h-8"><path d="M32 2H14C2 2 2 20 14 20H32" transform="translate(0,4)" fill="none" stroke="#7fbcf2" stroke-width="2.4"/><path d="M32 -2H12C-3 -2-3 28 12 28H32" transform="translate(0,3)" fill="none" stroke="#7fbcf2" stroke-width="2"/></svg>
          <svg viewBox="0 0 32 32" class="w-8 h-8"><rect x="5" y="11" width="20" height="19" fill="none" stroke="#d6d6d6" stroke-width="2"/><path d="M1 11H25L30 3H8L1 11ZM25 11V30L31 25V3" fill="none" stroke="#7fbcf2" stroke-width="2"/></svg>
          <svg viewBox="0 0 32 32" class="w-8 h-8"><path d="M13 2H1V29H13" fill="none" stroke="#d6d6d6" stroke-width="2"/><path d="M18 2H22L30 29H18" fill="none" stroke="#7fbcf2" stroke-width="2"/><path d="M5 20H16V16L24 20 16 24V20" fill="#fff" stroke="#fff"/></svg>
          <svg viewBox="0 0 32 32" class="w-8 h-8"><rect x="0" y="3" width="15" height="14" fill="#d6d6d6"/><path d="M15 3 18 0V14L15 17Z" fill="#a3a6ac"/><path d="M2 3 5 0H18L15 3Z" fill="#eee"/><rect x="18" y="15" width="14" height="14" fill="#9bcdf6"/><path d="M3 20V25H12" fill="none" stroke="#fff" stroke-width="2"/><path d="M10 22V28L15 25Z" fill="#fff"/></svg>
          <svg viewBox="0 0 32 32" class="w-8 h-8"><path d="M1 30V1H31V30H19" fill="none" stroke="#7fbcf2" stroke-width="2"/><path d="M1 12H18V31H1Z" fill="none" stroke="#d6d6d6" stroke-width="2"/></svg>
          <svg viewBox="0 0 32 32" class="w-8 h-8"><path d="M1 31 31 1" stroke="#d6d6d6" stroke-width="2"/><path d="M7 8 25 23" stroke="#7fbcf2" stroke-width="2"/><use href="#fly" x="30" y="30" width="8" height="8"/></svg>
          <svg viewBox="0 0 32 32" class="w-8 h-8"><path d="M0 16H7M25 16H32" stroke="#d6d6d6" stroke-width="2"/><path d="M6 10 15 16 6 22ZM26 10 17 16 26 22Z" fill="#7fbcf2"/></svg>
          <svg viewBox="0 0 32 32" class="w-8 h-8"><rect x="0" y="2" width="20" height="14" fill="#8f9298"/><path d="M22 4H30V9M12 28H2V24" fill="none" stroke="#fff" stroke-width="2"/><rect x="12" y="14" width="19" height="16" fill="none" stroke="#d6d6d6" stroke-width="2"/><path d="M18 26H28L22 20Z" fill="#d6d6d6"/></svg>
          <svg viewBox="0 0 32 32" class="w-8 h-8"><rect x="1" y="1" width="17" height="11" fill="#6d727c" stroke="#d6d6d6" stroke-width="2"/><circle cx="17" cy="11" r="6" fill="#6d727c" stroke="#d6d6d6" stroke-width="2"/><path d="M4 17V24H13" fill="none" stroke="#fff" stroke-width="2"/><path d="M11 20V28L16 24Z" fill="#fff"/><circle cx="25" cy="25" r="5" fill="none" stroke="#7fbcf2" stroke-width="2"/></svg>
          <svg viewBox="0 0 32 32" class="w-8 h-8"><rect x="14" y="0" width="3" height="20" fill="#c9a36f"/><path d="M6 32 12 20H19L25 32Z" fill="#f7cf7c"/></svg>
        </div>
      </div>

      <!-- Text -->
      <div class="h-[143px] mx-[8px] shrink-0 border-b-[2px] border-[#252b35]">
        <div class="h-[44px] flex items-center"><svg class="w-[17px] h-[9px] text-white"><use href="#tri"/></svg><span class="ml-[9px]">Text</span><svg class="w-[20px] h-[20px] ml-auto mr-[2px] text-white"><use href="#gear"/></svg></div>
        <div class="mt-[3px] ml-[8px] grid grid-cols-[repeat(8,32px)] gap-x-[12px] grid-rows-[32px_32px] gap-y-[12px] [&_svg]:overflow-visible">
          <div class="col-span-2 row-span-2 pl-[4px] pt-[6px]"><svg class="w-16 h-16 text-[#d6d6d6]" viewBox="0 0 64 64"><use href="#fa" x="6" y="3" width="52" height="56"/></svg></div>
          <div class="col-span-2 row-span-2 pl-[4px] pt-[6px]"><svg class="w-16 h-16 text-[#d6d6d6]" viewBox="0 0 64 64"><use href="#fa" x="0" y="0" width="46" height="50"/><use href="#brush" x="28" y="32" width="36" height="28"/></svg></div>
          <svg viewBox="0 0 32 32" class="w-8 h-8 text-[#d6d6d6]"><use href="#fa" x="4" y="0" width="24" height="26"/><path d="M0 30H32" stroke="#7fbcf2" stroke-width="2"/></svg>
          <svg viewBox="0 0 32 32" class="w-8 h-8"><text x="0" y="13" font-size="13" font-weight="700" letter-spacing="1" font-family="Liberation Sans" fill="#cfcfcf">ABC</text><path d="M6 21 13 27 26 16" fill="none" stroke="#64c26e" stroke-width="4"/></svg>
          <svg viewBox="0 0 32 32" class="w-8 h-8 text-[#7fbcf2]"><use href="#fa" x="19" y="0" width="12" height="12"/><rect x="8" y="13" width="24" height="8" fill="#7fbcf2"/><rect x="0" y="2" width="18" height="14" fill="#eee"/><path d="M7 5H15M7 9H15M7 13H15M3 5h2M3 9h2M3 13h2" stroke="#4d90e8" stroke-width="2"/><rect x="8" y="23" width="24" height="8" fill="#d6d6d6"/></svg>
          <svg viewBox="0 0 32 32" class="w-8 h-8 text-[#7fbcf2]"><text x="0" y="9" font-size="11" font-weight="700" letter-spacing="1" font-family="Liberation Sans" fill="#cfcfcf">PDF</text><path d="M4 12V21H12" fill="none" stroke="#fff" stroke-width="2"/><path d="M10 18V24L15 21Z" fill="#fff"/><use href="#fa" x="15" y="13" width="17" height="18"/></svg>
          <svg viewBox="0 0 32 32" class="w-8 h-8 text-white"><path d="M0 2H22V22H0Z" fill="#d6d6d6"/><path d="M4 7H18M4 11H18M4 15H18" stroke="#6d727c" stroke-width="2"/><path d="M24 2H30V8" fill="none" stroke="#fff" stroke-width="2"/><path d="M27 6H33L30 11Z" fill="#fff"/><use href="#fa" x="14" y="13" width="18" height="20"/></svg>
          <svg viewBox="0 0 32 32" class="w-8 h-8 text-[#d6d6d6]"><circle cx="13" cy="14" r="12" fill="none" stroke="#d6d6d6" stroke-width="2"/><use href="#fa" x="6" y="6" width="14" height="14"/><path d="M23 23 31 31" stroke="#c9a36f" stroke-width="3"/></svg>
          <svg viewBox="0 0 32 32" class="w-8 h-8 text-[#7fbcf2]"><use href="#fa" x="1" y="0" width="14" height="12"/><rect x="0" y="14" width="24" height="8" fill="#9bcdf6"/><rect x="0" y="24" width="24" height="8" fill="#d6d6d6"/><path d="M18 6C20 0 28 0 32 4M32 9C29 14 22 14 19 10" fill="none" stroke="#64c26e" stroke-width="2.4"/></svg>
          <svg viewBox="0 0 32 32" class="w-8 h-8"><text x="0" y="9" font-size="11" font-weight="700" letter-spacing="1" font-family="Liberation Sans" fill="#cfcfcf">PDF</text><path d="M3 11V20H11" fill="none" stroke="#fff" stroke-width="2"/><path d="M9 17V23L14 20Z" fill="#fff"/><path d="M18 30 28 16" stroke="#7fbcf2" stroke-width="4"/><path d="M24 14C26 11 30 12 32 14L28 19Z" fill="#7fbcf2"/></svg>
        </div>
      </div>

      <!-- Dimension -->
      <div class="h-[145px] mx-[8px] shrink-0 border-b-[2px] border-[#252b35]">
        <div class="h-[44px] flex items-center"><svg class="w-[17px] h-[9px] text-white"><use href="#tri"/></svg><span class="ml-[9px]">Dimension</span><svg class="w-[20px] h-[20px] ml-auto mr-[2px] text-white"><use href="#gear"/></svg></div>
        <div class="mt-[5px] ml-[8px] grid grid-cols-[repeat(8,32px)] gap-x-[12px] grid-rows-[32px_32px] gap-y-[12px] [&_svg]:overflow-visible">
          <div class="col-span-2 row-span-2 pl-[4px] pt-[6px]"><svg class="w-16 h-16" viewBox="0 0 64 64"><path d="M1 0V64M63 0V64M8 13H56" fill="none" stroke="#d6d6d6" stroke-width="2"/><path d="M2 13 10 9V17ZM62 13 54 9V17Z" fill="#d6d6d6"/><path d="M30 43 32 32 35 43ZM20 47 14 38 24 42ZM44 47 50 38 40 42ZM19 53 7 55 19 57ZM45 53 57 55 45 57Z" fill="#f7cf7c"/></svg></div>
          <div class="col-span-2 row-span-2 pl-[4px] pt-[6px]"><svg class="w-16 h-16" viewBox="0 0 64 64"><path d="M1 24V62M63 20V58M8 42H56" fill="none" stroke="#d6d6d6" stroke-width="2"/><path d="M2 42 10 38V46ZM62 42 54 38V46Z" fill="#d6d6d6"/><use href="#brush" x="28" y="4" width="36" height="28"/></svg></div>
          <svg viewBox="0 0 32 32" class="w-8 h-8"><path d="M1 0V32M31 0V32" stroke="#d6d6d6" stroke-width="2"/><path d="M6 9H26" stroke="#7fbcf2" stroke-width="2"/><path d="M3 9 9 5V13ZM29 9 23 5V13Z" fill="#7fbcf2"/><use href="#fly" x="30" y="28" width="8" height="8"/></svg>
          <svg viewBox="0 0 32 32" class="w-8 h-8"><circle cx="16" cy="14" r="14.5" fill="none" stroke="#d6d6d6" stroke-width="2"/><path d="M16 8V20M10 14H22" stroke="#7fbcf2" stroke-width="2"/><use href="#fly" x="30" y="28" width="8" height="8"/></svg>
          <svg viewBox="0 0 32 32" class="w-8 h-8"><path d="M0 12H10M20 12H24" stroke="#7fbcf2" stroke-width="2"/><path d="M21 5 31 12 21 19Z" fill="#7fbcf2"/><path d="M31 4V20M13 0V24M4 30H22" stroke="#d6d6d6" stroke-width="2"/><path d="M7 20 13 28 19 20Z" fill="#d6d6d6"/></svg>
          <svg viewBox="0 0 32 32" class="w-8 h-8"><path d="M4 3H28M4 25H28" stroke="#d6d6d6" stroke-width="2"/><path d="M0 3 6 0V6ZM32 3 26 0V6ZM0 25 6 22V28ZM32 25 26 22V28Z" fill="#d6d6d6"/><rect x="12" y="6" width="9" height="16" fill="#f7cf7c"/><path d="M16 9h5M16 13h5M16 17h5" stroke="#3d4451" stroke-width="1.4"/></svg>
          <svg viewBox="0 0 32 32" class="w-8 h-8"><path d="M1 0V24M16 0V24M31 0V24" stroke="#d6d6d6" stroke-width="2"/><path d="M4 8H28" stroke="#7fbcf2" stroke-width="2"/><path d="M3 8 9 4V12ZM14 8 9 4V12ZM18 8 23 4V12ZM29 8 23 4V12Z" fill="#7fbcf2"/><use href="#fly" x="30" y="28" width="8" height="8"/></svg>
          <svg viewBox="0 0 32 32" class="w-8 h-8"><rect x="1" y="3" width="30" height="22" fill="none" stroke="#d6d6d6" stroke-width="2"/><path d="M19 3V25" stroke="#d6d6d6" stroke-width="2"/><circle cx="10" cy="14" r="6" fill="#fff"/><path d="M4 14H16M10 8V20" stroke="#3d4451" stroke-width="2"/><text x="21" y="22" font-size="15" font-weight="700" font-family="Liberation Sans" fill="#eee">.1</text></svg>
          <svg viewBox="0 0 32 32" class="w-8 h-8"><path d="M1 0V32M31 0V32M4 6H28" stroke="#d6d6d6" stroke-width="2"/><path d="M2 6 8 3V9ZM30 6 24 3V9Z" fill="#d6d6d6"/><path d="M9 20 14 25 24 16" fill="none" stroke="#64c26e" stroke-width="4"/></svg>
          <svg viewBox="0 0 32 32" class="w-8 h-8"><path d="M0 9 11 0M20 30 31 22M8 6 27 24" fill="none" stroke="#d6d6d6" stroke-width="2"/><text x="18" y="13" font-size="13" font-weight="700" font-family="Liberation Sans" fill="#7fbcf2">X</text><use href="#fly" x="32" y="26" width="8" height="8"/></svg>
        </div>
      </div>

      <!-- Leader -->
      <div class="h-[144px] mx-[8px] shrink-0 border-b-[2px] border-[#252b35]">
        <div class="h-[44px] flex items-center"><svg class="w-[17px] h-[9px] text-white"><use href="#tri"/></svg><span class="ml-[9px]">Leader</span><svg class="w-[20px] h-[20px] ml-auto mr-[2px] text-white"><use href="#gear"/></svg></div>
        <div class="mt-[5px] ml-[8px] grid grid-cols-[repeat(8,32px)] gap-x-[12px] grid-rows-[32px_32px] gap-y-[12px] [&_svg]:overflow-visible">
          <div class="col-span-2 row-span-2 pl-[4px] pt-[6px]"><svg class="w-16 h-16" viewBox="0 0 64 64"><circle cx="49" cy="14" r="14" fill="none" stroke="#d6d6d6" stroke-width="2"/><path d="M8 55 25 16H35" fill="none" stroke="#d6d6d6" stroke-width="2"/><path d="M0 64 2 48 12 56Z" fill="#d6d6d6"/></svg></div>
          <div class="col-span-2 row-span-2 pl-[4px] pt-[6px]"><svg class="w-16 h-16" viewBox="0 0 64 64"><circle cx="49" cy="14" r="14" fill="none" stroke="#d6d6d6" stroke-width="2"/><path d="M8 55 25 16H35" fill="none" stroke="#d6d6d6" stroke-width="2"/><path d="M0 64 2 48 12 56Z" fill="#d6d6d6"/><use href="#brush" x="28" y="36" width="36" height="28"/></svg></div>
          <svg viewBox="0 0 32 32" class="w-8 h-8"><path d="M8 0V16M0 8H16" stroke="#74cc7d" stroke-width="6"/><use href="#ldr" x="6" y="12" width="18" height="20"/><path d="M16 16 24 30" stroke="#d6d6d6" stroke-width="2"/><circle cx="27" cy="14" r="4.5" fill="none" stroke="#d6d6d6" stroke-width="2"/></svg>
          <svg viewBox="0 0 32 32" class="w-8 h-8"><use href="#ldr" x="0" y="3" width="18" height="16"/><use href="#ldr" x="4" y="15" width="18" height="16"/><circle cx="23" cy="5" r="4.5" fill="none" stroke="#d6d6d6" stroke-width="2"/><circle cx="23" cy="15" r="4.5" fill="none" stroke="#d6d6d6" stroke-width="2"/><path d="M31 0V32" stroke="#7fbcf2" stroke-width="2"/></svg>
          <svg viewBox="0 0 32 32" class="w-8 h-8"><use href="#ldr" x="0" y="2" width="24" height="26"/><circle cx="24" cy="7" r="6" fill="none" stroke="#d6d6d6" stroke-width="2"/><path d="M26 16 17 24H23L17 32 32 22H25L30 16Z" fill="#f7cf7c"/></svg>
          <div></div>
          <svg viewBox="0 0 32 32" class="w-8 h-8"><path d="M1 1 13 13M13 1 1 13" stroke="#e86060" stroke-width="5"/><use href="#ldr" x="6" y="12" width="18" height="20"/><path d="M16 16 24 30" stroke="#d6d6d6" stroke-width="2"/><circle cx="27" cy="14" r="4.5" fill="none" stroke="#d6d6d6" stroke-width="2"/></svg>
          <svg viewBox="0 0 32 32" class="w-8 h-8"><use href="#ldr" x="0" y="6" width="22" height="24"/><circle cx="25" cy="8" r="6" fill="none" stroke="#d6d6d6" stroke-width="2"/><circle cx="25" cy="22" r="6" fill="none" stroke="#d6d6d6" stroke-width="2"/></svg>
        </div>
      </div>

      <!-- Table -->
      <div class="h-[144px] mx-[8px] shrink-0 border-b-[2px] border-[#252b35]">
        <div class="h-[44px] flex items-center"><svg class="w-[17px] h-[9px] text-white"><use href="#tri"/></svg><span class="ml-[9px]">Table</span><svg class="w-[20px] h-[20px] ml-auto mr-[2px] text-white"><use href="#gear"/></svg></div>
        <div class="mt-[4px] ml-[8px] grid grid-cols-[repeat(8,32px)] gap-x-[12px] grid-rows-[32px_32px] gap-y-[12px] [&_svg]:overflow-visible">
          <div class="col-span-2 row-span-2 pl-[4px] pt-[6px]"><svg class="w-16 h-16" viewBox="0 0 64 64"><path d="M2 6H62V58H2ZM2 20H62M2 32H62M2 45H62M22 20V58M42 20V58" fill="none" stroke="#d6d6d6" stroke-width="2"/><circle cx="64" cy="2" r="9.5" fill="#e8773c" stroke="#fff" stroke-width="2"/></svg></div>
          <div class="col-span-2 row-span-2 pl-[4px] pt-[6px]"><svg class="w-16 h-16" viewBox="0 0 64 64"><path d="M2 1H56V53H2ZM2 15H56M2 28H56M2 41H56M20 15V53M38 15V53" fill="none" stroke="#d6d6d6" stroke-width="2"/><circle cx="64" cy="2" r="9.5" fill="#e8773c" stroke="#fff" stroke-width="2"/><use href="#brush" x="28" y="36" width="36" height="28"/></svg></div>
          <svg viewBox="0 0 32 32" class="w-8 h-8"><use href="#tbl" x="0" y="4" width="24" height="24"/><rect x="14" y="14" width="18" height="18" fill="#eee"/><rect x="14" y="14" width="18" height="4" fill="#6d727c"/><path d="M17 22h3M17 27h3M22 22h7M22 27h7" stroke="#444" stroke-width="2"/><use href="#chain" x="0" y="0" width="9" height="22"/></svg>
          <svg viewBox="0 0 32 32" class="w-8 h-8"><use href="#tbl" x="2" y="0" width="30" height="26"/><path d="M27 14V24" stroke="#7fbcf2" stroke-width="6"/><path d="M20 22H32L26 30Z" fill="#7fbcf2"/><use href="#chain" x="0" y="0" width="9" height="22"/></svg>
          <div></div><div></div>
          <svg viewBox="0 0 32 32" class="w-8 h-8 text-[#7fbcf2]"><rect x="8" y="14" width="24" height="8" fill="#9bcdf6"/><rect x="8" y="24" width="24" height="8" fill="#d6d6d6"/><rect x="0" y="2" width="18" height="17" fill="#eee"/><path d="M7 6H15M7 10H15M7 14H15M3 6h2M3 10h2M3 14h2" stroke="#4d90e8" stroke-width="2"/><use href="#fa" x="20" y="0" width="12" height="13"/></svg>
          <svg viewBox="0 0 32 32" class="w-8 h-8"><use href="#tbl" x="0" y="6" width="32" height="26"/><use href="#chain" x="0" y="0" width="9" height="22"/><path d="M17 8C19 1 28 1 31 6M31 10C28 16 20 15 18 11" fill="none" stroke="#64c26e" stroke-width="2.4"/></svg>
        </div>
      </div>

      <!-- Parametric -->
      <div class="h-[143px] mx-[8px] shrink-0 border-b-[2px] border-[#252b35]">
        <div class="h-[44px] flex items-center"><svg class="w-[17px] h-[9px] text-white"><use href="#tri"/></svg><span class="ml-[9px]">Parametric</span><svg class="w-[20px] h-[20px] ml-auto mr-[2px] text-white"><use href="#gear"/></svg></div>
        <div class="mt-[4px] ml-[8px] grid grid-cols-[repeat(8,32px)] gap-x-[12px] grid-rows-[32px_32px] gap-y-[12px] [&_svg]:overflow-visible">
          <div class="col-span-2 row-span-2 pl-[4px] pt-[6px]"><svg class="w-16 h-16" viewBox="0 0 64 64"><path d="M3 0V58" stroke="#ce6a6a" stroke-width="2"/><path d="M10 61H62" stroke="#d6d6d6" stroke-width="2"/><rect x="0" y="58" width="6" height="6" fill="#ce6a6a"/><use href="#fly" x="66" y="66" width="8" height="8"/></svg></div>
          <svg viewBox="0 0 32 32" class="w-8 h-8"><path d="M13 0V24" stroke="#ce6a6a" stroke-width="2"/><rect x="14" y="0" width="12" height="10" fill="#8ec4f4"/><rect x="0" y="14" width="12" height="10" fill="#d6d6d6"/><path d="M22 18 15 25H21L16 32 32 23H25L30 18Z" fill="#f7cf7c"/></svg>
          <svg viewBox="0 0 32 32" class="w-8 h-8 text-[#f7cf7c]"><use href="#bk" width="32" height="32"/><use href="#bulb" x="18" y="13" width="14" height="20"/></svg>
          <div class="col-span-2 row-span-2 pl-[4px] pt-[6px]"><svg class="w-16 h-16" viewBox="0 0 64 64"><path d="M1 0V64M63 0V64M8 13H56" fill="none" stroke="#d6d6d6" stroke-width="2"/><path d="M2 13 12 8V18ZM62 13 52 8V18Z" fill="#d6d6d6"/><path d="M24 35V30C24 20 40 20 40 30V35" fill="none" stroke="#f7cf7c" stroke-width="4"/><rect x="18" y="35" width="28" height="24" fill="#f7cf7c"/><rect x="31" y="43" width="2" height="8" fill="#3d4451"/><use href="#fly" x="66" y="66" width="8" height="8"/></svg></div>
          <svg viewBox="0 0 32 32" class="w-8 h-8"><use href="#dm" width="32" height="32"/><path d="M31 0V32" stroke="#d6d6d6" stroke-width="2"/><path d="M8 24C7 18 10 16 15 15M11 15 16 13 15 18" fill="none" stroke="#7fbcf2" stroke-width="2"/><path d="M24 18C25 24 22 26 17 27M21 27 16 29 17 24" fill="none" stroke="#e86060" stroke-width="2"/></svg>
          <svg viewBox="0 0 32 32" class="w-8 h-8 text-[#f7cf7c]"><use href="#dm" width="28" height="32"/><use href="#bulb" x="18" y="13" width="14" height="20"/></svg>
          <svg viewBox="0 0 32 32" class="w-8 h-8"><use href="#bk" width="32" height="32"/><use href="#bulb2" x="18" y="13" width="14" height="20"/></svg>
          <svg viewBox="0 0 32 32" class="w-8 h-8 text-[#7fd4e0]"><use href="#bk" width="32" height="32"/><use href="#bulb" x="18" y="13" width="14" height="20"/></svg>
          <svg viewBox="0 0 32 32" class="w-8 h-8"><use href="#dm" width="28" height="32"/><use href="#bulb2" x="18" y="13" width="14" height="20"/></svg>
          <svg viewBox="0 0 32 32" class="w-8 h-8 text-[#7fd4e0]"><use href="#dm" width="28" height="32"/><use href="#bulb" x="18" y="13" width="14" height="20"/></svg>
        </div>
      </div>

      <div class="mt-auto h-[44px] pl-[31px] flex items-center">
        <svg class="w-[22px] h-[22px]" viewBox="0 0 22 22"><path d="M11 0V22M0 11H22" stroke="#d6d6d6" stroke-width="2"/></svg>
        <svg class="w-[26px] h-[20px] ml-[35px]" viewBox="0 0 26 20"><path d="M5 1H26M5 19H26" stroke="#d6d6d6" stroke-width="2"/><path d="M0 10H18" stroke="#d6d6d6" stroke-width="4"/><path d="M21 12 23.500 7 26 12Z" fill="#d6d6d6"/></svg>
      </div>
    </div>

    <!-- right column -->
    <div class="flex-1 min-w-0 flex flex-col">
      <div class="flex-1 min-h-0 flex">
        <!-- centre -->
        <div class="flex-1 min-w-0 flex flex-col">
          <div class="h-[44px] shrink-0 flex items-stretch bg-[#3b4453] border-b-[2px] border-[#252b35] pl-[2px]">
            <div class="w-[46px] flex items-center justify-center border-r-[2px] border-[#2b313c]"><svg class="w-[28px] h-[30px]" viewBox="0 0 28 30"><rect x="0" y="0" width="13" height="15" fill="#80bdf2"/><rect x="15" y="0" width="13" height="15" fill="#d6d6d6"/><rect x="0" y="17" width="13" height="13" fill="#d6d6d6"/><rect x="15" y="17" width="13" height="13" fill="#d6d6d6"/></svg></div>
            <div class="w-[46px] flex items-center justify-center"><svg class="w-[24px] h-[24px]" viewBox="0 0 24 24"><path d="M12 0V24M0 12H24" stroke="#d6d6d6" stroke-width="2"/></svg></div>
            <div class="w-[258px] bg-[#4d5a6e] pl-[6px] flex items-center font-['Liberation_Sans'] text-[22px] text-[#e6e6e6] border-x-[2px] border-[#2b313c] pb-[4px]">Drawing1*</div>
          </div>
          <!-- viewport -->
          <div class="flex-1 relative overflow-hidden bg-[#232932] bg-[linear-gradient(#2e353e_2px,transparent_2px),linear-gradient(90deg,#2e353e_2px,transparent_2px),linear-gradient(#29303a_1px,transparent_1px),linear-gradient(90deg,#29303a_1px,transparent_1px)] bg-size-[148.8px_148.8px,148.8px_148.8px,29.76px_29.76px,29.76px_29.76px] bg-position-[96.6px_145px,96.6px_145px,7.3px_25.9px,7.3px_25.9px]">
            <svg class="absolute left-0 top-0 w-[2003px] h-[1515px]" viewBox="0 0 2003 1515">
              <path d="M541 0V1515M0 890H2003" stroke="#d62a2a" stroke-width="2"/>
              <circle cx="1744" cy="166" r="169" fill="none" stroke="#50565f" stroke-width="26"/>
              <rect x="1880" y="110" width="8" height="103" fill="#9a9ea5"/>
              <text x="1935" y="181" font-family="Liberation Sans" font-size="46" font-weight="700" fill="#8f939a">E</text>
              <path d="M541 881V785M550 890H644" stroke="#c8c8c8" stroke-width="2"/>
              <rect x="534" y="882" width="16" height="16" fill="none" stroke="#e0e0e0" stroke-width="2"/>
              <path d="M550 755 558 767 566 755M558 767V783" fill="none" stroke="#c8c8c8" stroke-width="2"/>
              <path d="M651 863 679 885M679 863 651 885" stroke="#c8c8c8" stroke-width="2"/>
            </svg>
            <div class="absolute left-[30px] top-[11px] flex items-center text-[22px] leading-[30px] font-semibold tracking-[1px] text-[#a3a9b2] font-['Open_Sans']">
              <svg class="w-[14px] h-[14px] mr-[18px]" viewBox="0 0 14 14"><path d="M7 0V14M0 7H14" stroke="#a3a9b2" stroke-width="2"/></svg>
              <span class="w-[2px] h-[24px] bg-[#8a8f98] mr-[12px]"></span>Top<span class="w-[2px] h-[24px] bg-[#8a8f98] mx-[14px]"></span>2D Wireframe
            </div>
            <!-- command line -->
            <div class="absolute left-[501px] top-[1279px] w-[1000px] flex flex-col items-end font-['Open_Sans']">
              <div class="w-[920px] h-[185px] bg-[#3c4452] pt-[5px] pl-[10px] text-[20px] leading-[30px] text-[#bfc3c8] relative">
                <div>Command: LA LAYER</div>
                <div>Command:</div>
                <div>Command:</div>
                <div>Command: PO POINT</div>
                <div class="whitespace-pre">Current point modes:  PDMODE=0  PDSIZE=0.0000</div>
                <div>Specify a point: 1.5,0</div>
                <div class="absolute left-[902px] top-[141px] w-[7px] h-[40px] rounded-[4px] bg-[#8a8f98]"></div>
              </div>
              <div class="w-[1000px] h-[50px] bg-[#3c4452] flex items-center text-[21.5px] font-semibold text-[#f2f2f2] relative">
                <svg class="w-[46px] h-[24px] ml-[16px]" viewBox="0 0 46 24"><path d="M1 2 10 7 1 12" fill="none" stroke="#c8ccd2" stroke-width="2"/><path d="M13 20H26" stroke="#c8ccd2" stroke-width="2"/><path d="M32 4H44L38 14Z" fill="#c8ccd2"/></svg>
                <span class="ml-[28px]">PTYPE DDPTYPE PTYPE</span>
                <span class="absolute left-[876px] top-[12px] w-[26px] h-[26px] rounded-full bg-white text-[#222] text-[19px] leading-[26px] text-center font-bold">?</span>
                <svg class="absolute left-[919px] top-[21px] w-[13px] h-[9px] text-[#9a9fa7]"><use href="#tri"/></svg>
                <svg class="absolute left-[955px] top-[10px] w-[26px] h-[34px]" viewBox="0 0 26 34"><path d="M7 13H1V33H25V13H19" fill="none" stroke="#c8ccd2" stroke-width="2"/><path d="M7 13V33" stroke="#c8ccd2" stroke-width="2"/><path d="M13 4V22" stroke="#7fbcf2" stroke-width="2"/><path d="M8 8 13 0 18 8Z" fill="#7fbcf2"/></svg>
              </div>
            </div>
          </div>
        </div>

        <!-- properties panel -->
        <div class="w-[509px] shrink-0 bg-[#3c4554] flex flex-col text-[22px] text-[#c0c4ca] overflow-hidden">
          <div class="h-[46px] shrink-0 flex">
            <div class="w-[103px] flex items-center justify-center"><svg class="w-[34px] h-[30px]" viewBox="0 0 34 30"><path d="M8 0H26L20 7H2ZM5 9H22L19 14H0ZM2 16H16L13 21H0Z" fill="#d6d6d6"/><circle cx="25" cy="21" r="8" fill="#e6e6e6"/><path d="M25 19V26M25 15V17" stroke="#3b4453" stroke-width="2.5"/></svg></div>
            <div class="w-[106px] bg-[#2f3540] border-x-[2px] border-b-[2px] border-[#272c36] flex items-center justify-center"><svg class="w-[32px] h-[28px]" viewBox="0 0 32 28"><path d="M6 8H20L32 14V28H0V18H6Z" fill="#dcdcdc"/><path d="M4 2C7-1 10 1 10 4V16C10 20 4 20 4 16V6C4 4 7 4 7 6V14" fill="none" stroke="#dcdcdc" stroke-width="2"/></svg></div>
            <div class="w-[105px] bg-[#2f3540] border-r-[2px] border-b-[2px] border-[#272c36] flex items-center justify-center"><svg class="w-[28px] h-[28px] overflow-visible" viewBox="0 0 28 28"><rect x="0" y="2" width="27" height="26" fill="#cfcfcf"/><rect x="0" y="2" width="27" height="4" fill="#7a7f88"/><path d="M4 9h5v4H4zM11 9h5v4h-5zM18 9h5v4h-5zM4 15h5v4H4zM11 15h5v4h-5zM18 15h5v4h-5z" fill="#4a4f58"/><rect x="4" y="22" width="19" height="3" fill="#4a4f58"/><circle cx="28" cy="-2" r="9" fill="#e8773c" stroke="#fff" stroke-width="2"/></svg></div>
            <div class="w-[147px] bg-[#2f3540] border-r-[2px] border-b-[2px] border-[#272c36]"></div>
            <div class="flex-1 flex items-center justify-center border-b-[2px] border-[#2d333e]"><svg class="w-[14px] h-[12px]" viewBox="0 0 14 12"><path d="M1 1 6 6 1 11M8 1 13 6 8 11" fill="none" stroke="#8a9099" stroke-width="1.6"/></svg></div>
          </div>
          <div class="h-[43px] shrink-0 flex items-start pl-[21px] text-[#dcdee1] text-[24px] leading-[32px]">
            Properties
            <div class="ml-[136px] mt-[1px] flex h-[27px] w-[118px] border-[2px] border-[#2c323d] rounded-[2px] text-[17px] font-medium text-center leading-[23px]"><span class="w-[60px] bg-[#4f5c72] text-[#dfe2e6]">All</span><span class="flex-1 text-[#7b828d] border-l-[2px] border-[#2c323d]">My</span></div>
            <svg class="w-[28px] h-[28px] ml-[21px] mt-[1px]" viewBox="0 0 28 28"><path d="M20 10V1H1V24H10" fill="none" stroke="#858b95" stroke-width="2"/><path d="M5 7H16M5 12H16M5 17H12" stroke="#858b95" stroke-width="2"/><path d="M11 28V20L22 9 28 14 17 26Z" fill="#858b95"/></svg>
            <svg class="w-[24px] h-[26px] ml-[22px] mt-[1px]" viewBox="0 0 24 26"><path d="M8 1H22V25H8M8 7V1M8 25V19" fill="none" stroke="#e0e0e0" stroke-width="2"/><path d="M14 13H2M7 8 2 13 7 18" fill="none" stroke="#e0e0e0" stroke-width="2"/></svg>
          </div>
          <div class="ml-[21px] w-[466px] h-[40px] shrink-0 mt-[5px] mb-[9px] rounded-[3px] bg-[#434c5c] flex items-center pl-[14px] text-[#7d8592]">Model Space<svg class="w-[12px] h-[8px] ml-auto mr-[10px] text-[#7d8592]"><use href="#tri"/></svg></div>

          <div class="flex items-center h-[63px] shrink-0 font-bold text-[23px] text-[#d4d6da]"><svg class="w-[18px] h-[12px] ml-[27px] mr-[21px]" viewBox="0 0 18 12"><path d="M2 2 9 9 16 2" fill="none" stroke="#262c36" stroke-width="3"/></svg>General</div>
          <div class="flex items-center h-[46px] shrink-0"><div class="w-[258px] text-right">Color</div><div class="ml-[21px] w-[203px] h-[37px] rounded-[4px] border-2 border-[#2f3a40] bg-[#4b566a] flex items-center text-[#eceef0] pl-[16px]"><span class="w-[18px] h-[18px] bg-[#66f04a] border-2 border-black mr-[22px]"></span>ByLayer<svg class="w-[12px] h-[8px] ml-auto mr-[9px] text-[#cbd0d6]"><use href="#tri"/></svg></div></div>
          <div class="flex items-center h-[46px] shrink-0"><div class="w-[258px] text-right">Layer</div><div class="ml-[21px] w-[203px] h-[37px] rounded-[4px] border-2 border-[#2f3a40] bg-[#4b566a] flex items-center text-[#eceef0] pl-[12px]">foco<svg class="w-[12px] h-[8px] ml-auto mr-[9px] text-[#cbd0d6]"><use href="#tri"/></svg></div></div>
          <div class="flex items-center h-[46px] shrink-0"><div class="w-[258px] text-right">Linetype</div><div class="ml-[21px] w-[203px] h-[37px] rounded-[4px] border-2 border-[#2f3a40] bg-[#4b566a] flex items-center text-[#eceef0] pl-[12px]"><span class="w-[64px] h-[2px] bg-white mr-[28px]"></span>ByL...<svg class="w-[12px] h-[8px] ml-auto mr-[9px] text-[#cbd0d6]"><use href="#tri"/></svg></div></div>
          <div class="flex items-center h-[46px] shrink-0"><div class="w-[258px] text-right">Linetype scale</div><div class="ml-[21px] w-[203px] h-[37px] rounded-[4px] border-2 border-[#2f3a40] bg-[#4b566a] flex items-center text-[#eceef0] pl-[6px]">1.0000</div></div>
          <div class="flex items-center h-[46px] shrink-0"><div class="w-[258px] text-right">Lineweight</div><div class="ml-[21px] w-[203px] h-[37px] rounded-[4px] border-2 border-[#2f3a40] bg-[#4b566a] flex items-center text-[#eceef0] pl-[12px]">ByLayer<svg class="w-[12px] h-[8px] ml-auto mr-[9px] text-[#cbd0d6]"><use href="#tri"/></svg></div></div>
          <div class="flex items-center h-[46px] shrink-0"><div class="w-[258px] text-right">Transparency</div>
            <div class="ml-[26px] w-[113px] h-[33px] border-2 border-[#2f3a40] bg-[#4b566a] flex items-center justify-end text-[#eceef0] pr-[4px] relative"><span class="absolute left-[-2px] top-0 w-[3px] h-[6px] bg-[#5a9bf0]"></span><span class="absolute left-[-2px] bottom-0 w-[3px] h-[6px] bg-[#5a9bf0]"></span><span class="absolute left-[52px] bottom-[3px] w-[1px] h-[10px] bg-[#b0b5bc]"></span>0</div>
            <div class="ml-[7px] w-[77px] h-[37px] rounded-[4px] border-2 border-[#2f3a40] bg-[#4b566a] flex items-center pl-[14px]"><svg class="w-[24px] h-[20px]" viewBox="0 0 24 20"><path d="M6 0H24L18 7H0Z" fill="#80bdf2"/><path d="M2 10H18L22 6M0 14H16L22 10M0 18H16L22 14" fill="none" stroke="#d6d6d6" stroke-width="2"/></svg><svg class="w-[12px] h-[8px] ml-auto mr-[9px] text-[#cbd0d6]"><use href="#tri"/></svg></div></div>

          <div class="flex items-center h-[61px] shrink-0 font-bold text-[23px] text-[#d4d6da]"><svg class="w-[18px] h-[12px] ml-[27px] mr-[21px]" viewBox="0 0 18 12"><path d="M2 2 9 9 16 2" fill="none" stroke="#262c36" stroke-width="3"/></svg>Annotation</div>
          <div class="flex items-center h-[46px] shrink-0"><div class="w-[258px] text-right">Text style</div><div class="ml-[21px] w-[203px] h-[37px] rounded-[4px] border-2 border-[#2f3a40] bg-[#4b566a] flex items-center text-[#eceef0] pl-[12px]">Standard<svg class="w-[12px] h-[8px] ml-auto mr-[9px] text-[#cbd0d6]"><use href="#tri"/></svg></div></div>
          <div class="flex items-center h-[46px] shrink-0"><div class="w-[258px] text-right">Dimension style</div><div class="ml-[21px] w-[203px] h-[37px] rounded-[4px] border-2 border-[#2f3a40] bg-[#4b566a] flex items-center text-[#eceef0] pl-[12px]">Standard<svg class="w-[12px] h-[8px] ml-auto mr-[9px] text-[#cbd0d6]"><use href="#tri"/></svg></div></div>
          <div class="flex items-center h-[46px] shrink-0"><div class="w-[258px] text-right">Detail View style</div><div class="ml-[21px] w-[203px] h-[37px] rounded-[4px] border-2 border-[#2f3a40] bg-[#4b566a] flex items-center text-[#eceef0] pl-[12px]">Imperial24<svg class="w-[12px] h-[8px] ml-auto mr-[9px] text-[#cbd0d6]"><use href="#tri"/></svg></div></div>
          <div class="flex items-center h-[46px] shrink-0"><div class="w-[258px] text-right">Multileader style</div><div class="ml-[21px] w-[203px] h-[37px] rounded-[4px] border-2 border-[#2f3a40] bg-[#4b566a] flex items-center text-[#eceef0] pl-[12px]">Standard<svg class="w-[12px] h-[8px] ml-auto mr-[9px] text-[#cbd0d6]"><use href="#tri"/></svg></div></div>
          <div class="flex items-center h-[46px] shrink-0"><div class="w-[258px] pl-[86px] whitespace-nowrap">Section View st...</div><div class="ml-[21px] w-[203px] h-[37px] rounded-[4px] border-2 border-[#2f3a40] bg-[#4b566a] flex items-center text-[#eceef0] pl-[12px]">Imperial24<svg class="w-[12px] h-[8px] ml-auto mr-[9px] text-[#cbd0d6]"><use href="#tri"/></svg></div></div>
          <div class="flex items-center h-[46px] shrink-0"><div class="w-[258px] text-right">Table style</div><div class="ml-[21px] w-[203px] h-[37px] rounded-[4px] border-2 border-[#2f3a40] bg-[#4b566a] flex items-center text-[#eceef0] pl-[12px]">Standard<svg class="w-[12px] h-[8px] ml-auto mr-[9px] text-[#cbd0d6]"><use href="#tri"/></svg></div></div>
          <div class="flex items-center h-[46px] shrink-0"><div class="w-[258px] pl-[86px] whitespace-nowrap">Annotation scale</div><div class="ml-[21px] w-[203px] h-[37px] rounded-[4px] border-2 border-[#2f3a40] bg-[#4b566a] flex items-center text-[#eceef0] pl-[12px]">1:1<svg class="w-[12px] h-[8px] ml-auto mr-[9px] text-[#cbd0d6]"><use href="#tri"/></svg></div></div>
          <div class="flex items-center h-[46px] shrink-0"><div class="w-[258px] text-right">Text height</div><div class="ml-[21px] w-[159px] h-[37px] rounded-[4px] border-2 border-[#2f3a40] bg-[#4b566a] flex items-center text-[#eceef0] pl-[6px]">0.2000</div>
            <svg class="ml-[6px] w-[38px] h-[34px]" viewBox="0 0 38 34"><rect width="38" height="34" rx="3" fill="#333a46"/><path d="M5 2V30M33 2V12" stroke="#d6d6d6" stroke-width="2"/><path d="M8 7H30" stroke="#80bdf2" stroke-width="2"/><path d="M24 24H38M30 16V32" stroke="#eee" stroke-width="2"/><circle cx="30" cy="24" r="4" fill="none" stroke="#eee" stroke-width="2"/></svg></div>

          <div class="flex items-center h-[62px] shrink-0 font-bold text-[23px] text-[#d4d6da]"><svg class="w-[18px] h-[12px] ml-[27px] mr-[21px]" viewBox="0 0 18 12"><path d="M2 2 9 9 16 2" fill="none" stroke="#262c36" stroke-width="3"/></svg>Plot Style</div>
          <div class="flex items-center h-[46px] shrink-0"><div class="w-[258px] text-right">Plot style</div><div class="ml-[21px] w-[203px] h-[37px] rounded-[4px] border-2 border-[#2f3a40] bg-[#4b566a] flex items-center text-[#eceef0] pl-[12px]">ByColor<svg class="w-[12px] h-[8px] ml-auto mr-[9px] text-[#cbd0d6]"><use href="#tri"/></svg></div></div>
          <div class="flex items-center h-[46px] shrink-0"><div class="w-[258px] text-right">Plot style table</div><div class="ml-[21px] w-[203px] h-[37px] rounded-[4px] border-2 border-[#2f3a40] bg-[#4b566a] flex items-center text-[#eceef0] pl-[12px]">None<svg class="w-[12px] h-[8px] ml-auto mr-[9px] text-[#cbd0d6]"><use href="#tri"/></svg></div></div>
          <div class="flex items-center h-[46px] shrink-0"><div class="w-[258px] pl-[86px] whitespace-nowrap">Plot style attach...</div><div class="ml-[21px] w-[203px] h-[34px] rounded-[3px] bg-[#434c5c] flex items-center pl-[7px] text-[#858c97]">Model</div></div>
          <div class="flex items-center h-[47px] shrink-0"><div class="w-[258px] text-right">Plot table type</div><div class="ml-[21px] w-[203px] h-[34px] rounded-[3px] bg-[#434c5c] flex items-center pl-[7px] text-[#858c97]">Not available</div></div>

          <div class="flex items-center h-[61px] shrink-0 font-bold text-[23px] text-[#d4d6da]"><svg class="w-[18px] h-[12px] ml-[27px] mr-[21px]" viewBox="0 0 18 12"><path d="M2 2 9 9 16 2" fill="none" stroke="#262c36" stroke-width="3"/></svg>UCS</div>
          <div class="flex items-center h-[46px] shrink-0"><div class="w-[258px] text-right">UCS Name</div><div class="ml-[21px] w-[203px] h-[34px] rounded-[3px] bg-[#434c5c]"></div></div>
          <div class="flex items-center h-[46px] shrink-0 pl-[281px] text-[#eceef0]"><span class="w-[28px] h-[28px] rounded-[5px] bg-[#7a8eb3] border-2 border-[#2c323d] flex items-center justify-center mr-[9px]"><svg class="w-[18px] h-[14px]" viewBox="0 0 18 14"><path d="M2 7 7 12 16 2" fill="none" stroke="#262c36" stroke-width="3"/></svg></span>UCS per view...</div>

          <div class="flex items-center h-[62px] shrink-0 font-bold text-[23px] text-[#d4d6da]"><svg class="w-[18px] h-[12px] ml-[27px] mr-[21px]" viewBox="0 0 18 12"><path d="M2 2 9 9 16 2" fill="none" stroke="#262c36" stroke-width="3"/></svg>3D Visualization</div>
          <div class="flex items-center h-[46px] shrink-0"><div class="w-[258px] text-right">Material</div><div class="ml-[21px] w-[203px] h-[37px] rounded-[4px] border-2 border-[#2f3a40] bg-[#4b566a] flex items-center text-[#eceef0] pl-[12px]">ByLayer<svg class="w-[12px] h-[8px] ml-auto mr-[9px] text-[#cbd0d6]"><use href="#tri"/></svg></div></div>
          <div class="flex items-center h-[46px] shrink-0"><div class="w-[258px] text-right">Shadow Display</div><div class="ml-[21px] w-[203px] h-[37px] rounded-[4px] border-2 border-[#2f3a40] bg-[#4b566a] flex items-center text-[#eceef0] pl-[12px]">Casts and Re...<svg class="w-[12px] h-[8px] ml-auto mr-[9px] text-[#cbd0d6]"><use href="#tri"/></svg></div></div>

          <div class="flex items-center h-[61px] shrink-0 font-bold text-[23px] text-[#d4d6da]"><svg class="w-[18px] h-[12px] ml-[27px] mr-[21px]" viewBox="0 0 18 12"><path d="M2 2 9 9 16 2" fill="none" stroke="#262c36" stroke-width="3"/></svg>Visual Style</div>
          <div class="h-[16px] shrink-0 pt-[6px] overflow-hidden"><div class="ml-[279px] w-[203px] h-[37px] rounded-[4px] border-2 border-[#2f3a40] bg-[#4b566a]"></div></div>
        </div>
      </div>

      <!-- status bar -->
      <div class="h-[45px] shrink-0 border-t-[2px] border-[#252b35] flex items-stretch text-[22px] text-[#a8acb3] relative">
        <div class="w-[111px] ml-[2px] bg-[#4e5a6e] text-[#eceef0] font-semibold flex items-center justify-center text-[21px]">Model</div>
        <div class="w-[60px] flex items-center justify-center"><svg class="w-[22px] h-[22px]" viewBox="0 0 22 22"><path d="M11 0V22M0 11H22" stroke="#c8ccd2" stroke-width="2"/></svg></div>
        <div class="w-[96px] flex items-center justify-center border-l-[2px] border-[#2f3540]">Layout1</div>
        <div class="w-[140px] flex items-center justify-center border-l-[2px] border-[#2f3540]">Layout2</div>
        <div class="absolute left-[1487px] top-0 bottom-0 w-[2px] bg-[#2f3540]"></div>
        <div class="absolute left-[1504px] top-0 bottom-0 flex items-center text-[22.4px] whitespace-pre">59.4527, 14.6667 , 0.0000</div>
        <div class="ml-auto flex items-center gap-[4px] pr-[12px] [&>*]:shrink-0">
          <div class="w-[40px] h-[40px] bg-[#6b8fbd] flex items-center justify-center"><svg class="w-[30px] h-[32px]" viewBox="0 0 30 32"><path d="M8 0V32M16 0V32M23 0V32M0 8H30M0 16H30M0 24H30" stroke="#fff" stroke-width="2"/></svg></div>
          <div class="w-[40px] h-[40px] flex items-center justify-center"><svg class="w-[26px] h-[26px]" viewBox="0 0 26 26"><path d="M0 3H26M0 13H26M0 23H26" stroke="#d6d6d6" stroke-width="4" stroke-dasharray="5 5.500"/></svg></div>
          <div class="w-[40px] h-[40px] flex items-center justify-center"><svg class="w-[32px] h-[30px]" viewBox="0 0 32 30"><path d="M2 0V29H32M2 20H10V29" fill="none" stroke="#d6d6d6" stroke-width="2"/></svg></div>
          <div class="w-[40px] h-[40px] flex items-center justify-center"><svg class="w-[32px] h-[30px]" viewBox="0 0 32 30"><circle cx="13" cy="17" r="12" fill="none" stroke="#d6d6d6" stroke-width="2"/><path d="M6 26 22 1M13 17H32" stroke="#d6d6d6" stroke-width="2"/></svg></div>
          <div class="w-[40px] h-[40px] flex items-center justify-center"><svg class="w-[32px] h-[30px]" viewBox="0 0 32 30"><path d="M6 2V14M0 8H12" stroke="#d6d6d6" stroke-width="2"/><rect x="12" y="16" width="20" height="12" fill="#d6d6d6"/></svg></div>
          <div class="w-[40px] h-[40px] flex items-center justify-center"><svg class="w-[34px] h-[28px]" viewBox="0 0 34 28"><path d="M14 0H34V5H14ZM0 10H34V16H20V12H0ZM0 21H18V28H0ZM20 21H34V26H20Z" fill="#d6d6d6"/></svg></div>
          <div class="w-[40px] h-[40px] bg-[#6b8fbd] flex items-center justify-center"><svg class="w-[30px] h-[30px]" viewBox="0 0 30 30"><defs><pattern id="ck" width="6" height="6" patternUnits="userSpaceOnUse"><rect width="3" height="3" fill="#fff"/><rect x="3" y="3" width="3" height="3" fill="#fff"/></pattern></defs><rect x="1" y="1" width="28" height="28" fill="url(#ck)" stroke="#fff" stroke-width="2"/></svg></div>
          <div class="w-[40px] h-[40px] bg-[#6b8fbd] flex items-center justify-center"><svg class="w-[32px] h-[32px]" viewBox="0 0 32 32"><path d="M6 2H1V28H6M20 2H25V14" fill="none" stroke="#fff" stroke-width="2"/><rect x="8" y="5" width="10" height="8" fill="none" stroke="#fff" stroke-width="2"/><circle cx="13" cy="20" r="5" fill="#a9bfd9" stroke="#fff" stroke-width="2"/><path d="M20 14 32 26 26 26 28 32 24 32 22 27 20 29Z" fill="#fff"/></svg></div>
          <div class="w-[40px] h-[40px] bg-[#6b8fbd] flex items-center justify-center"><svg class="w-[32px] h-[30px]" viewBox="0 0 32 30"><path d="M0 27H32M2 27 24 3" fill="none" stroke="#fff" stroke-width="3"/><circle cx="14" cy="15" r="3.5" fill="#fff"/></svg></div>
          <div class="w-[40px] h-[40px] bg-[#6b8fbd] flex items-center justify-center"><svg class="w-[32px] h-[32px]" viewBox="0 0 32 32"><rect x="1" y="1" width="9" height="9" fill="none" stroke="#fff" stroke-width="2"/><path d="M10 6H31V30H5V10" fill="none" stroke="#fff" stroke-width="2"/></svg></div>
          <div class="w-[40px] h-[40px] bg-[#6b8fbd] flex items-center justify-center"><svg class="w-[34px] h-[36px]" viewBox="0 0 34 36"><path d="M13 0 18 12 20 22 30 34 16 28 2 34 9 22Z" fill="#fff"/><circle cx="25" cy="9" r="7" fill="#fff"/></svg></div>
          <div class="w-[40px] h-[40px] flex items-center justify-center"><svg class="w-[34px] h-[36px]" viewBox="0 0 34 36"><path d="M13 2 18 14 19 22 28 33 14 27 1 33 8 22Z" fill="#d6d6d6"/><path d="M27 0 20 12H24L21 20 31 8H26Z" fill="#e9bd6a"/></svg></div>
          <div class="w-[26px] ml-[4px] h-[40px] flex items-center justify-center"><svg class="w-[30px] h-[36px] shrink-0" viewBox="0 0 30 36"><path d="M15 1 20 16 21 22 30 34 15 28 0 34 9 22Z" fill="#d6d6d6"/></svg></div>
          <span class="ml-[4px] text-[24px] w-[28px]">1:1</span>
          <svg class="w-[12px] h-[9px] ml-[4px] text-[#a8acb3]"><use href="#tri"/></svg>
          <svg class="w-[32px] h-[36px] ml-[12px]" viewBox="0 0 32 36"><rect x="1" y="1" width="14" height="15" fill="none" stroke="#d6d6d6" stroke-width="2"/><circle cx="25" cy="15" r="6" fill="none" stroke="#d6d6d6" stroke-width="2"/><path d="M11 35 16 23 22 35Z" fill="none" stroke="#d6d6d6" stroke-width="2"/></svg>
          <svg class="w-[34px] h-[36px] ml-[8px] text-[#d6d6d6]"><use href="#gear"/></svg>
        </div>
      </div>
    </div>
  </div>
</div>

<!-- dialog -->
<div class="absolute left-[1545px] top-[180px] w-[707px] h-[874px] rounded-[24px] bg-[#ebebeb] overflow-hidden shadow-[0_0_6px_rgba(0,0,0,.4)] flex flex-col text-[#2a2a2a] text-[25.7px]">
  <div class="h-[57px] shrink-0 bg-[#f1f1ef] border-b-[2px] border-[#cfcfcf] flex items-center justify-center font-semibold text-[#4a4a4a] text-[26.5px]">Point Style</div>
  <div class="mt-[33px] h-[38px] flex items-center ml-[44px]">Point Size:<div class="ml-[13px] w-[152px] h-[38px] -mt-[2px] bg-white border border-[#d4d4d4] border-b-[#bdbdbd] pl-[6px] flex items-center">5.0000</div><span class="ml-[17px]">%</span></div>
  <div class="mt-[19px] h-[28px] flex items-center ml-[39px]"><span class="w-[28px] h-[28px] rounded-full bg-[linear-gradient(#4d93f8,#2f75f3)] flex items-center justify-center mr-[12px]"><span class="w-[11px] h-[11px] rounded-full bg-white"></span></span>Set Size Relative to Screen</div>
  <div class="mt-[12px] h-[28px] flex items-center ml-[39px]"><span class="w-[28px] h-[28px] rounded-full bg-white border border-[#cfcfcf] mr-[12px]"></span>Set Size in Absolute Units</div>
  <div class="mt-[22px] h-[30px] ml-[62px] text-[22.5px] leading-[30px]">Point Style</div>
  <div class="mt-[6px] ml-[40px] w-[626px] h-[489px] rounded-[10px] bg-[#e3e3e3] border border-[#dcdcdc] pt-[20px] pl-[34px]">
    <div class="grid grid-cols-[repeat(5,95px)] gap-[21px]">
      <div class="h-[95px] p-[2px] bg-[#adadad]"><svg class="w-full h-full bg-black border-[4px] border-[#6e6e6e] border-b-[#505050]" viewBox="-42 -42 84 84"><use href="#pd"/></svg></div>
      <div class="h-[95px] p-[2px] bg-[#adadad]"><svg class="w-full h-full bg-black border-[4px] border-[#6e6e6e] border-b-[#505050]" viewBox="-42 -42 84 84"></svg></div>
      <div class="h-[95px] p-[2px] bg-[#adadad]"><svg class="w-full h-full bg-black border-[4px] border-[#6e6e6e] border-b-[#505050]" viewBox="-42 -42 84 84"><use href="#pp"/></svg></div>
      <div class="h-[95px] p-[2px] bg-[#adadad]"><svg class="w-full h-full bg-black border-[4px] border-[#6e6e6e] border-b-[#505050]" viewBox="-42 -42 84 84"><use href="#px"/></svg></div>
      <div class="h-[95px] p-[2px] bg-[#adadad]"><svg class="w-full h-full bg-black border-[4px] border-[#6e6e6e] border-b-[#505050]" viewBox="-42 -42 84 84"><use href="#pt"/></svg></div>

      <div class="h-[95px] p-[2px] bg-[#adadad]"><svg class="w-full h-full bg-black border-[4px] border-[#6e6e6e] border-b-[#505050]" viewBox="-42 -42 84 84"><use href="#pd"/><use href="#pc"/></svg></div>
      <div class="h-[95px] p-[2px] bg-[#adadad]"><svg class="w-full h-full bg-black border-[4px] border-[#6e6e6e] border-b-[#505050]" viewBox="-42 -42 84 84"><use href="#pc"/></svg></div>
      <div class="h-[95px] p-[2px] bg-[#adadad]"><svg class="w-full h-full bg-black border-[4px] border-[#6e6e6e] border-b-[#505050]" viewBox="-42 -42 84 84"><use href="#pp"/><use href="#pc"/></svg></div>
      <div class="h-[95px] p-[2px] bg-[#adadad] relative"><div class="absolute -inset-[6px] rounded-[5px] border-[6px] border-[#8aabe8]"></div><svg class="w-full h-full bg-black border-[4px] border-[#6e6e6e] border-b-[#505050]" viewBox="-42 -42 84 84"><use href="#px"/><use href="#pc"/></svg></div>
      <div class="h-[95px] p-[2px] bg-[#adadad]"><svg class="w-full h-full bg-black border-[4px] border-[#6e6e6e] border-b-[#505050]" viewBox="-42 -42 84 84"><use href="#pt"/><use href="#pc"/></svg></div>

      <div class="h-[95px] p-[2px] bg-[#adadad]"><svg class="w-full h-full bg-black border-[4px] border-[#6e6e6e] border-b-[#505050]" viewBox="-42 -42 84 84"><use href="#pd"/><use href="#ps"/></svg></div>
      <div class="h-[95px] p-[2px] bg-[#adadad]"><svg class="w-full h-full bg-black border-[4px] border-[#6e6e6e] border-b-[#505050]" viewBox="-42 -42 84 84"><use href="#ps"/></svg></div>
      <div class="h-[95px] p-[2px] bg-[#adadad]"><svg class="w-full h-full bg-black border-[4px] border-[#6e6e6e] border-b-[#505050]" viewBox="-42 -42 84 84"><use href="#pp"/><use href="#ps"/></svg></div>
      <div class="h-[95px] p-[2px] bg-[#adadad]"><svg class="w-full h-full bg-black border-[4px] border-[#6e6e6e] border-b-[#505050]" viewBox="-42 -42 84 84"><use href="#px"/><use href="#ps"/></svg></div>
      <div class="h-[95px] p-[2px] bg-[#adadad]"><svg class="w-full h-full bg-black border-[4px] border-[#6e6e6e] border-b-[#505050]" viewBox="-42 -42 84 84"><use href="#pt"/><use href="#ps"/></svg></div>

      <div class="h-[95px] p-[2px] bg-[#adadad]"><svg class="w-full h-full bg-black border-[4px] border-[#6e6e6e] border-b-[#505050]" viewBox="-42 -42 84 84"><use href="#pd"/><use href="#pc"/><use href="#ps"/></svg></div>
      <div class="h-[95px] p-[2px] bg-[#adadad]"><svg class="w-full h-full bg-black border-[4px] border-[#6e6e6e] border-b-[#505050]" viewBox="-42 -42 84 84"><use href="#pc"/><use href="#ps"/></svg></div>
      <div class="h-[95px] p-[2px] bg-[#adadad]"><svg class="w-full h-full bg-black border-[4px] border-[#6e6e6e] border-b-[#505050]" viewBox="-42 -42 84 84"><use href="#pp"/><use href="#pc"/><use href="#ps"/></svg></div>
      <div class="h-[95px] p-[2px] bg-[#adadad]"><svg class="w-full h-full bg-black border-[4px] border-[#6e6e6e] border-b-[#505050]" viewBox="-42 -42 84 84"><use href="#px"/><use href="#pc"/><use href="#ps"/></svg></div>
      <div class="h-[95px] p-[2px] bg-[#adadad]"><svg class="w-full h-full bg-black border-[4px] border-[#6e6e6e] border-b-[#505050]" viewBox="-42 -42 84 84"><use href="#pt"/><use href="#pc"/><use href="#ps"/></svg></div>
    </div>
  </div>
  <div class="mt-[31px] ml-[40px] flex items-start">
    <span class="w-[40px] h-[40px] rounded-full bg-white shadow-[0_1px_3px_rgba(0,0,0,.35)] flex items-center justify-center font-semibold text-[26px]">?</span>
    <span class="ml-[238px] mt-[2px] w-[164px] h-[40px] rounded-[8px] bg-white shadow-[0_1px_3px_rgba(0,0,0,.35)] flex items-center justify-center text-[26px]">Cancel</span>
    <span class="ml-[28px] mt-[2px] w-[164px] h-[40px] rounded-[8px] bg-[linear-gradient(#4d90f7,#3378f6)] text-white flex items-center justify-center text-[26px]">OK</span>
  </div>
</div>
</body>
</html>
